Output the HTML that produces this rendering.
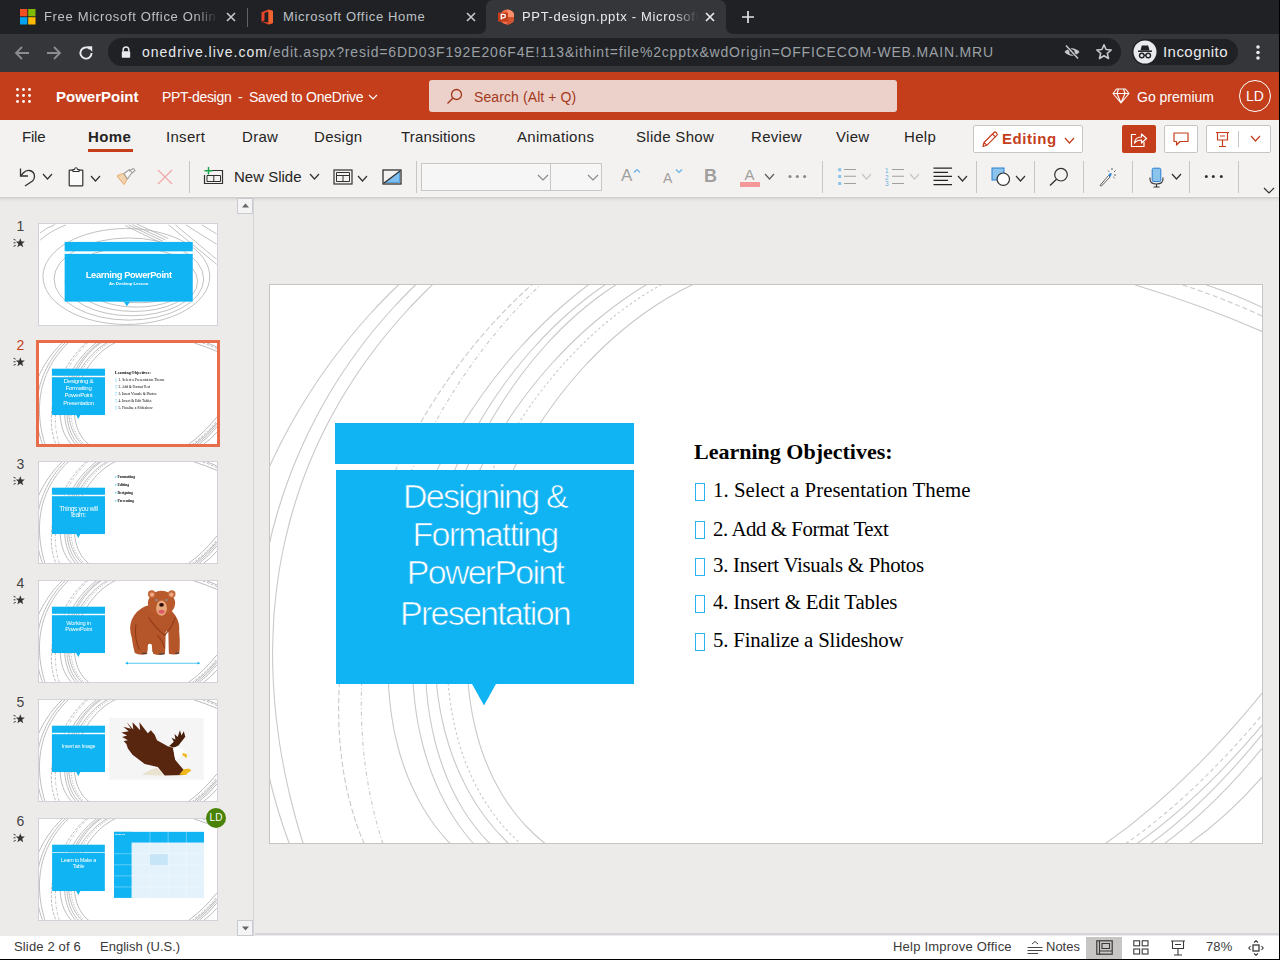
<!DOCTYPE html>
<html><head><meta charset="utf-8">
<style>
*{box-sizing:border-box;margin:0;padding:0}
html,body{width:1280px;height:960px;overflow:hidden;background:#000;font-family:"Liberation Sans",sans-serif}
.a{position:absolute}
#root{position:absolute;left:0;top:0;width:1280px;height:960px;overflow:hidden;background:#edebe9}
/* chrome */
#tabs{left:0;top:0;width:1280px;height:34px;background:#202124}
.tabt{position:absolute;top:9px;font-size:13px;color:#bdc1c6;white-space:nowrap;overflow:hidden;line-height:16px}
#addr{left:0;top:34px;width:1280px;height:38px;background:#35363a}
#url{left:108px;top:4px;width:1013px;height:28px;border-radius:14px;background:#202124}
/* office header */
#ohdr{left:0;top:72px;width:1279px;height:48px;background:#c43e1c}
/* ribbon */
#rib{left:0;top:120px;width:1279px;height:77px;background:#f3f2f1;border-bottom:1px solid #f7f6f4}
.rt{position:absolute;top:128px;font-size:15px;color:#252423;line-height:18px}
.sep{position:absolute;width:1px;background:#c8c6c4}
/* left pane */
.num{position:absolute;left:13.5px;font-size:14px;color:#484644;width:14px;text-align:center;line-height:16px}
.thumb{position:absolute;left:38px;width:180px;height:102px;border:1px solid #d2d0d8;background:#fff;overflow:hidden}
/* status */
#status{left:0;top:936px;width:1279px;height:23px;background:#fff}
.st{position:absolute;top:939px;font-size:13px;color:#3b3a39;line-height:16px;white-space:nowrap}
.ttl{left:65px;width:300px;text-align:center;color:#fff;font:34px/34px "Liberation Sans",sans-serif;letter-spacing:-1.75px;white-space:nowrap;-webkit-text-stroke:0.7px #10b4f2;paint-order:normal}
.itm{left:442px;font:20.8px/21px "Liberation Serif",serif;color:#000;white-space:nowrap}
.bx{left:424.5px;width:10px;height:17.5px;border:1.3px solid #2bb5ef}
</style></head>
<body><div id="root">

<!-- ============ CHROME TABS ============ -->
<div id="tabs" class="a">
  <!-- tab1 -->
  <svg class="a" style="left:20px;top:9px" width="16" height="16"><rect x="0" y="0" width="7.3" height="7.3" fill="#f25022"/><rect x="8.2" y="0" width="7.3" height="7.3" fill="#7fba00"/><rect x="0" y="8.2" width="7.3" height="7.3" fill="#00a4ef"/><rect x="8.2" y="8.2" width="7.3" height="7.3" fill="#ffb900"/></svg>
  <div class="tabt" style="left:44px;width:174px;letter-spacing:0.67px;-webkit-mask-image:linear-gradient(90deg,#000 150px,transparent 174px)">Free Microsoft Office Online</div>
  <svg class="a" style="left:226px;top:12px" width="10" height="10"><path d="M1 1L9 9M9 1L1 9" stroke="#c5c8cc" stroke-width="1.6"/></svg>
  <div class="a" style="left:247px;top:8px;width:1px;height:19px;background:#5f6368"></div>
  <!-- tab2 -->
  <svg class="a" style="left:260px;top:9px" width="14" height="16" viewBox="0 0 14 16"><path d="M1.5 3.2 L8.5 0.5 L13 2 L13 14 L8.5 15.5 L1.5 12.8 L8.5 13.6 L8.5 2.6 L4.5 4 L4.5 11.6 L1.5 12.8 Z" fill="#e8442a"/><path d="M8.5 0.5 L13 2 L13 14 L8.5 15.5 Z" fill="#f0622f"/></svg>
  <div class="tabt" style="left:283px;letter-spacing:0.67px">Microsoft Office Home</div>
  <svg class="a" style="left:466px;top:12px" width="10" height="10"><path d="M1 1L9 9M9 1L1 9" stroke="#c5c8cc" stroke-width="1.6"/></svg>
  <!-- active tab -->
  <svg class="a" style="left:478px;top:0" width="257" height="34"><path d="M0 34 Q8 34 8 26 L8 8 Q8 0 16 0 L240 0 Q248 0 248 8 L248 26 Q248 34 256 34 Z" fill="#35363a"/></svg>
  <svg class="a" style="left:498px;top:9px" width="16" height="16" viewBox="0 0 16 16"><circle cx="9.2" cy="8" r="7.6" fill="#ed6c47"/><path d="M9.2 0.4 A7.6 7.6 0 0 1 16.8 8 L9.2 8 Z" fill="#ff8f6b"/><path d="M9.2 8 L16.8 8 A7.6 7.6 0 0 1 9.2 15.6 Z" fill="#d35230"/><rect x="0" y="3.6" width="10" height="9" fill="#c43e1c"/><path d="M3.3 10.6 V5.4 H5.6 Q7.4 5.4 7.4 7.1 Q7.4 8.8 5.6 8.8 H3.3" fill="none" stroke="#fff" stroke-width="1.3"/></svg>
  <div class="tabt" style="left:522px;width:176px;color:#e8eaed;letter-spacing:0.67px;-webkit-mask-image:linear-gradient(90deg,#000 152px,transparent 176px)">PPT-design.pptx - Microsoft Office</div>
  <svg class="a" style="left:705px;top:12px" width="10" height="10"><path d="M1 1L9 9M9 1L1 9" stroke="#e8eaed" stroke-width="1.7"/></svg>
  <svg class="a" style="left:741px;top:10px" width="14" height="14"><path d="M7 1V13M1 7H13" stroke="#e0e2e6" stroke-width="1.7"/></svg>
</div>

<!-- ============ ADDRESS ROW ============ -->
<div id="addr" class="a">
  <svg class="a" style="left:14px;top:11px" width="16" height="16"><path d="M15 8H2M8 2L2 8L8 14" fill="none" stroke="#8a8d91" stroke-width="1.8"/></svg>
  <svg class="a" style="left:46px;top:11px" width="16" height="16"><path d="M1 8H14M8 2L14 8L8 14" fill="none" stroke="#8a8d91" stroke-width="1.8"/></svg>
  <svg class="a" style="left:77px;top:10px" width="18" height="18" viewBox="0 0 18 18"><path d="M14.6 9 A5.6 5.6 0 1 1 12.9 5" fill="none" stroke="#e8eaed" stroke-width="1.9"/><path d="M9.8 2.3 H15.2 V7.7 Z" fill="#e8eaed"/></svg>
  <div id="url" class="a">
    <svg class="a" style="left:13px;top:8px" width="10" height="12" viewBox="0 0 10 12"><path d="M2.2 5.5V3.8A2.8 2.8 0 0 1 7.8 3.8V5.5" fill="none" stroke="#e8eaed" stroke-width="1.5"/><rect x="0.8" y="5.3" width="8.4" height="6.5" rx="0.8" fill="#e8eaed"/></svg>
    <div class="a" style="left:34px;top:5px;font-size:14px;line-height:18px;letter-spacing:0.83px;white-space:nowrap;color:#9aa0a6"><span style="color:#e8eaed;letter-spacing:1px">onedrive.live.com</span>/edit.aspx?resid=6DD03F192E206F4E!113&amp;ithint=file%2cpptx&amp;wdOrigin=OFFICECOM-WEB.MAIN.MRU</div>
    <svg class="a" style="left:955px;top:6px" width="18" height="16" viewBox="0 0 18 16"><path d="M1.5 8 Q9 0.5 16.5 8 Q9 15.5 1.5 8Z" fill="#c5c8cc"/><circle cx="9" cy="8" r="2.6" fill="#202124"/><path d="M3 1.5 L15 14.5" stroke="#202124" stroke-width="2.6"/><path d="M3 1.5 L15 14.5" stroke="#c5c8cc" stroke-width="1.5"/></svg>
    <svg class="a" style="left:987px;top:5px" width="18" height="18" viewBox="0 0 18 18"><path d="M9 1.8 L11.1 6.5 L16.2 7 L12.3 10.4 L13.5 15.5 L9 12.8 L4.5 15.5 L5.7 10.4 L1.8 7 L6.9 6.5 Z" fill="none" stroke="#c5c8cc" stroke-width="1.6" stroke-linejoin="round"/></svg>
  </div>
  <div class="a" style="left:1132px;top:5px;width:106px;height:26px;border-radius:13px;background:#202124"></div>
  <svg class="a" style="left:1133px;top:6px" width="24" height="24" viewBox="0 0 24 24"><circle cx="12" cy="12" r="11.5" fill="#e8eaed"/><path d="M5 11.2H19" stroke="#202124" stroke-width="1.5"/><path d="M7.5 10.5 L8.8 5.5 H15.2 L16.5 10.5 Z" fill="#202124"/><circle cx="8.8" cy="15.5" r="2.3" fill="none" stroke="#202124" stroke-width="1.4"/><circle cx="15.2" cy="15.5" r="2.3" fill="none" stroke="#202124" stroke-width="1.4"/><path d="M11 15.3H13" stroke="#202124" stroke-width="1.3"/></svg>
  <div class="a" style="left:1163px;top:9px;font-size:15px;line-height:18px;color:#e8eaed;letter-spacing:0.45px">Incognito</div>
  <svg class="a" style="left:1254px;top:10px" width="8" height="18"><circle cx="4" cy="3" r="1.8" fill="#e8eaed"/><circle cx="4" cy="8.5" r="1.8" fill="#e8eaed"/><circle cx="4" cy="14" r="1.8" fill="#e8eaed"/></svg>
</div>

<!-- ============ OFFICE HEADER ============ -->
<div id="ohdr" class="a">
  <svg class="a" style="left:15px;top:15px" width="18" height="18" viewBox="0 0 18 18" fill="#fff"><circle cx="2.5" cy="2.5" r="1.4"/><circle cx="8.5" cy="2.5" r="1.4"/><circle cx="14.5" cy="2.5" r="1.4"/><circle cx="2.5" cy="8.5" r="1.4"/><circle cx="8.5" cy="8.5" r="1.4"/><circle cx="14.5" cy="8.5" r="1.4"/><circle cx="2.5" cy="14.5" r="1.4"/><circle cx="8.5" cy="14.5" r="1.4"/><circle cx="14.5" cy="14.5" r="1.4"/></svg>
  <div class="a" style="left:56px;top:16px;font:bold 15px/18px 'Liberation Sans',sans-serif;color:#fff;white-space:nowrap">PowerPoint</div>
  <div class="a" style="left:162px;top:16px;font:14px/18px 'Liberation Sans',sans-serif;color:#fff;white-space:nowrap;letter-spacing:-0.3px">PPT-design</div>
  <div class="a" style="left:238px;top:16px;font:14px/18px 'Liberation Sans',sans-serif;color:#fff">-</div>
  <div class="a" style="left:249px;top:16px;font:14px/18px 'Liberation Sans',sans-serif;color:#fff;white-space:nowrap;letter-spacing:-0.23px">Saved to OneDrive</div>
  <svg class="a" style="left:368px;top:22px" width="10" height="6"><path d="M1 1L5 5L9 1" fill="none" stroke="#fff" stroke-width="1.2"/></svg>
  <div class="a" style="left:429px;top:8px;width:468px;height:32px;border-radius:3px;background:#ebd1c9"></div>
  <svg class="a" style="left:446px;top:16px" width="17" height="17" viewBox="0 0 17 17"><circle cx="10.5" cy="6.5" r="5" fill="none" stroke="#a4381c" stroke-width="1.3"/><path d="M7 10L1.5 15.5" stroke="#a4381c" stroke-width="1.4"/></svg>
  <div class="a" style="left:474px;top:16px;font:14px/18px 'Liberation Sans',sans-serif;color:#a4381c;white-space:nowrap;letter-spacing:0.1px">Search (Alt + Q)</div>
  <svg class="a" style="left:1112px;top:16px" width="18" height="16" viewBox="0 0 18 16"><path d="M4.5 1H13.5L17 5.5L9 15L1 5.5Z M1 5.5H17 M6.5 1L5 5.5L9 15L13 5.5L11.5 1" fill="none" stroke="#fff" stroke-width="1.1" stroke-linejoin="round"/></svg>
  <div class="a" style="left:1137px;top:16px;font:14px/18px 'Liberation Sans',sans-serif;color:#fff;white-space:nowrap">Go premium</div>
  <div class="a" style="left:1239px;top:8px;width:32px;height:32px;border-radius:50%;border:1.2px solid #fff;color:#fff;font:14px/30px 'Liberation Sans',sans-serif;text-align:center">LD</div>
</div>

<!-- ============ RIBBON ============ -->
<div id="rib" class="a"></div>
<div class="rt" style="left:22px;letter-spacing:-0.2px">File</div>
<div class="rt" style="left:88px;font-weight:bold;letter-spacing:0.4px">Home</div>
<div class="a" style="left:88px;top:149px;width:45px;height:3px;background:#c43e1c"></div>
<div class="rt" style="left:166px;letter-spacing:0.3px">Insert</div>
<div class="rt" style="left:242px;letter-spacing:0.3px">Draw</div>
<div class="rt" style="left:314px;letter-spacing:0.3px">Design</div>
<div class="rt" style="left:401px;letter-spacing:0.15px">Transitions</div>
<div class="rt" style="left:517px;letter-spacing:0.3px">Animations</div>
<div class="rt" style="left:636px;letter-spacing:0.3px">Slide Show</div>
<div class="rt" style="left:751px;letter-spacing:0.3px">Review</div>
<div class="rt" style="left:836px;letter-spacing:0.3px">View</div>
<div class="rt" style="left:904px;letter-spacing:0.3px">Help</div>
<!-- editing button -->
<div class="a" style="left:973px;top:125px;width:110px;height:28px;border:1px solid #c8c6c4;border-radius:2px;background:#fff"></div>
<svg class="a" style="left:981px;top:130px" width="18" height="18" viewBox="0 0 18 18"><path d="M2 16.5L3 12.5L13 2.5Q14 1.5 15 2.5L15.8 3.3Q16.8 4.3 15.8 5.3L5.8 15.3Z M11.5 4L14.3 6.8 M3 12.5L5.8 15.3" fill="none" stroke="#c43e1c" stroke-width="1.2" stroke-linejoin="round"/></svg>
<div class="a" style="left:1002px;top:130px;font:bold 15px/18px 'Liberation Sans',sans-serif;color:#c43e1c;letter-spacing:0.55px">Editing</div>
<svg class="a" style="left:1064px;top:137px" width="11" height="7"><path d="M1 1L5.5 6L10 1" fill="none" stroke="#c43e1c" stroke-width="1.2"/></svg>
<div class="a" style="left:1122px;top:125px;width:34px;height:28px;border-radius:2px;background:#c43e1c"></div>
<svg class="a" style="left:1129px;top:131px" width="19" height="17" viewBox="0 0 19 17"><path d="M7 3.5H2.5V15.5H15V11" fill="none" stroke="#fff" stroke-width="1.2"/><path d="M5.5 12Q6 6 12.5 6V3L17.5 7.5L12.5 12V9Q8 9 5.5 12Z" fill="none" stroke="#fff" stroke-width="1.2" stroke-linejoin="round"/></svg>
<div class="a" style="left:1164px;top:125px;width:34px;height:28px;border:1px solid #c8c6c4;border-radius:2px;background:#fff"></div>
<svg class="a" style="left:1173px;top:132px" width="16" height="14" viewBox="0 0 16 14"><path d="M1 1H15V9.5H7L3.5 13V9.5H1Z" fill="none" stroke="#c43e1c" stroke-width="1.2" stroke-linejoin="round"/></svg>
<div class="a" style="left:1206px;top:125px;width:65px;height:28px;border:1px solid #c8c6c4;border-radius:2px;background:#fff"></div>
<svg class="a" style="left:1215px;top:131px" width="15" height="17" viewBox="0 0 15 17"><path d="M1 1.5H14 M2.5 1.5V9H12.5V1.5 M7.5 9V15 M4 15.5H11 M5 5H10" fill="none" stroke="#c43e1c" stroke-width="1.2"/></svg>
<div class="a" style="left:1238px;top:131px;width:1px;height:16px;background:#c8c6c4"></div>
<svg class="a" style="left:1250px;top:135px" width="11" height="7"><path d="M1 1L5.5 6L10 1" fill="none" stroke="#c43e1c" stroke-width="1.2"/></svg>
<!-- toolbar -->
<svg class="a" style="left:18px;top:167px" width="20" height="20" viewBox="0 0 20 20"><path d="M2.5 1.5V9H10" fill="none" stroke="#323130" stroke-width="1.3"/><path d="M2.8 8.8L5.5 5.8Q8 3 11.5 3.5Q16.5 4.5 16.5 9.5Q16.5 12 14.5 14L7 19" fill="none" stroke="#323130" stroke-width="1.3"/></svg>
<svg class="a" style="left:42px;top:173px" width="11" height="7"><path d="M1 1L5.5 6L10 1" fill="none" stroke="#323130" stroke-width="1.2"/></svg>
<svg class="a" style="left:68px;top:167px" width="16" height="20" viewBox="0 0 16 20"><rect x="1.2" y="3.2" width="13.6" height="15.6" rx="0.5" fill="#fafafa" stroke="#323130" stroke-width="1.2"/><path d="M5 4.5V2.5H6.5Q6.8 0.8 8 0.8Q9.2 0.8 9.5 2.5H11V4.5Z" fill="#fff" stroke="#323130" stroke-width="1.1"/></svg>
<svg class="a" style="left:90px;top:175px" width="11" height="7"><path d="M1 1L5.5 6L10 1" fill="none" stroke="#323130" stroke-width="1.2"/></svg>
<svg class="a" style="left:116px;top:168px" width="20" height="18" viewBox="0 0 20 18"><path d="M1 8Q4 6 7.5 5.5L11 11Q10 14 8 16.5Q4 12 1 8Z" fill="#f3d2b0" stroke="#e8a868" stroke-width="1"/><path d="M8 5.5L13.5 1.5L16 4.5L11.5 11Z M13 3L17.5 0.5L19 2.5L15.5 5.5" fill="#f8f8f8" stroke="#a19f9d" stroke-width="1.1" stroke-linejoin="round"/></svg>
<svg class="a" style="left:157px;top:169px" width="16" height="16"><path d="M1 1L15 15M15 1L1 15" stroke="#f1a7a7" stroke-width="1.2"/></svg>
<div class="sep" style="left:189px;top:161px;height:32px"></div>
<svg class="a" style="left:203px;top:166px" width="21" height="19" viewBox="0 0 21 19"><path d="M5.5 4.5H19.5V17.5H1.5V9" fill="none" stroke="#323130" stroke-width="1.2"/><path d="M4 9.5H17.5V15.5H4Z M10.8 9.5V15.5" fill="none" stroke="#323130" stroke-width="1"/><path d="M5.5 1V8.5M1.5 4.75H9.5" stroke="#17a34a" stroke-width="1.4"/></svg>
<div class="a" style="left:234px;top:168px;font:15px/18px 'Liberation Sans',sans-serif;color:#252423;white-space:nowrap">New Slide</div>
<svg class="a" style="left:309px;top:173px" width="11" height="7"><path d="M1 1L5.5 6L10 1" fill="none" stroke="#323130" stroke-width="1.2"/></svg>
<svg class="a" style="left:333px;top:169px" width="20" height="16" viewBox="0 0 20 16"><rect x="1" y="1" width="18" height="14" fill="none" stroke="#323130" stroke-width="1.2"/><path d="M3.5 3.5H16.5V12.5H3.5Z M3.5 6.5H16.5 M10 6.5V12.5" fill="none" stroke="#323130" stroke-width="1"/></svg>
<svg class="a" style="left:357px;top:175px" width="11" height="7"><path d="M1 1L5.5 6L10 1" fill="none" stroke="#323130" stroke-width="1.2"/></svg>
<svg class="a" style="left:382px;top:169px" width="20" height="16" viewBox="0 0 20 16"><path d="M17.5 2.5V13.5H3.5Z" fill="#7fbff0" stroke="#3a8fd6" stroke-width="0.8"/><rect x="1" y="1" width="18" height="14" fill="none" stroke="#323130" stroke-width="1.3"/><path d="M2 14L18 2" stroke="#323130" stroke-width="1.2"/></svg>
<div class="sep" style="left:416px;top:161px;height:32px"></div>
<div class="a" style="left:421px;top:163px;width:181px;height:28px;border:1px solid #c8c6c4;background:#f6f6f6"></div>
<div class="a" style="left:550px;top:163px;width:1px;height:28px;background:#c8c6c4"></div>
<svg class="a" style="left:537px;top:174px" width="12" height="7"><path d="M1 1L6.0 6L11 1" fill="none" stroke="#8a8886" stroke-width="1.2"/></svg>
<svg class="a" style="left:587px;top:174px" width="12" height="7"><path d="M1 1L6.0 6L11 1" fill="none" stroke="#8a8886" stroke-width="1.2"/></svg>
<div class="a" style="left:621px;top:166px;font:17px/20px 'Liberation Sans',sans-serif;color:#a19f9d">A</div>
<svg class="a" style="left:633px;top:168px" width="8" height="6"><path d="M1 4.5L4 1.5L7 4.5" fill="none" stroke="#69afe5" stroke-width="1.2"/></svg>
<div class="a" style="left:663px;top:169.5px;font:14px/16px 'Liberation Sans',sans-serif;color:#a19f9d">A</div>
<svg class="a" style="left:675px;top:168px" width="8" height="6"><path d="M1 1.5L4 4.5L7 1.5" fill="none" stroke="#69afe5" stroke-width="1.2"/></svg>
<div class="a" style="left:704px;top:166px;font:bold 18px/20px 'Liberation Sans',sans-serif;color:#a19f9d">B</div>
<div class="a" style="left:744.5px;top:166px;font:15px/18px 'Liberation Sans',sans-serif;color:#a19f9d">A</div>
<div class="a" style="left:740px;top:182px;width:20px;height:5px;background:#f4989a"></div>
<svg class="a" style="left:764px;top:173px" width="11" height="7"><path d="M1 1L5.5 6L10 1" fill="none" stroke="#605e5c" stroke-width="1.2"/></svg>
<svg class="a" style="left:787px;top:174px" width="20" height="5" fill="#8a8886"><circle cx="3" cy="2.5" r="1.5"/><circle cx="10.3" cy="2.5" r="1.5"/><circle cx="17.6" cy="2.5" r="1.5"/></svg>
<div class="sep" style="left:822px;top:161px;height:32px"></div>
<svg class="a" style="left:838px;top:168px" width="20" height="18" viewBox="0 0 20 18"><path d="M0.2 0.2h3v3h-3z M0.2 7h3v3h-3z M0.2 14h3v3h-3z" fill="#8ac4ea"/><path d="M6 1.5H18 M6 8.3H18 M6 15.5H18" stroke="#a19f9d" stroke-width="1.1"/></svg>
<svg class="a" style="left:861px;top:173px" width="11" height="7"><path d="M1 1L5.5 6L10 1" fill="none" stroke="#c8c6c4" stroke-width="1.2"/></svg>
<svg class="a" style="left:884px;top:166px" width="22" height="20" viewBox="0 0 22 20"><text x="1" y="7" font-size="6.5" fill="#69afe5" font-family="Liberation Sans">1</text><text x="1" y="13.5" font-size="6.5" fill="#69afe5" font-family="Liberation Sans">2</text><text x="1" y="20" font-size="6.5" fill="#69afe5" font-family="Liberation Sans">3</text><path d="M8 3.5H20 M8 10.3H20 M8 17.5H20" stroke="#a19f9d" stroke-width="1.1"/></svg>
<svg class="a" style="left:909px;top:173px" width="11" height="7"><path d="M1 1L5.5 6L10 1" fill="none" stroke="#c8c6c4" stroke-width="1.2"/></svg>
<svg class="a" style="left:933px;top:167px" width="20" height="19" viewBox="0 0 20 19"><path d="M0.5 1.2H19 M0.5 5.3H15 M0.5 9.3H19 M0.5 13.4H15 M0.5 17.6H19" stroke="#252423" stroke-width="1.2"/></svg>
<svg class="a" style="left:957px;top:175px" width="11" height="7"><path d="M1 1L5.5 6L10 1" fill="none" stroke="#323130" stroke-width="1.2"/></svg>
<div class="sep" style="left:976px;top:161px;height:32px"></div>
<svg class="a" style="left:991px;top:167px" width="20" height="20" viewBox="0 0 20 20"><rect x="1" y="1" width="12" height="12" fill="#8ac4ea" stroke="#2b7cd3" stroke-width="1"/><circle cx="12.3" cy="12.2" r="6.2" fill="#fff" stroke="#323130" stroke-width="1.2"/></svg>
<svg class="a" style="left:1015px;top:175px" width="11" height="7"><path d="M1 1L5.5 6L10 1" fill="none" stroke="#323130" stroke-width="1.2"/></svg>
<div class="sep" style="left:1034px;top:161px;height:32px"></div>
<svg class="a" style="left:1049px;top:167px" width="20" height="20" viewBox="0 0 20 20"><circle cx="12" cy="7.7" r="6.3" fill="none" stroke="#323130" stroke-width="1.2"/><path d="M7.5 12.3L1 18.5" stroke="#323130" stroke-width="1.3"/></svg>
<div class="sep" style="left:1083px;top:161px;height:32px"></div>
<svg class="a" style="left:1099px;top:167px" width="18" height="20" viewBox="0 0 18 20"><path d="M1 18.5L9.5 8.5L11 10L2.5 19Z" fill="#fff" stroke="#605e5c" stroke-width="1"/><path d="M9.3 8.2Q10.5 5.5 12.5 6Q13.2 8.5 11 10.2Z" fill="#2b88d8"/><path d="M13 1V3 M16.5 3.5L15 5 M17 8H15 M9 3.5L10.3 4.8 M15.5 11L14.3 10" stroke="#605e5c" stroke-width="1"/></svg>
<div class="sep" style="left:1132px;top:161px;height:32px"></div>
<svg class="a" style="left:1149px;top:167px" width="16" height="21" viewBox="0 0 16 21"><rect x="3.2" y="1.2" width="8.6" height="13.4" rx="1.5" fill="#8ac4ea" stroke="#2b7cd3" stroke-width="1"/><path d="M1 10.5V12Q1 17 7.5 17Q14 17 14 12V10.5 M7.5 17V20 M4.5 20H10.5" fill="none" stroke="#323130" stroke-width="1.1"/></svg>
<svg class="a" style="left:1171px;top:173px" width="11" height="7"><path d="M1 1L5.5 6L10 1" fill="none" stroke="#323130" stroke-width="1.2"/></svg>
<div class="sep" style="left:1189px;top:161px;height:32px"></div>
<svg class="a" style="left:1203px;top:174px" width="21" height="5" fill="#323130"><circle cx="3.3" cy="2.5" r="1.5"/><circle cx="10.3" cy="2.5" r="1.5"/><circle cx="18.3" cy="2.5" r="1.5"/></svg>
<div class="sep" style="left:1238px;top:161px;height:32px"></div>
<svg class="a" style="left:1263px;top:187px" width="12" height="7"><path d="M1 1L6.0 6L11 1" fill="none" stroke="#323130" stroke-width="1.2"/></svg>


<!-- ============ MAIN SLIDE ============ -->
<div id="slide" class="a" style="left:269px;top:284px;width:994px;height:560px;border:1px solid #c4c4c4;background:#fff;overflow:hidden">
<svg class="a" style="left:0;top:0" width="992" height="558" viewBox="270 285 992 558"><g fill="none" stroke="#c9c9c9" stroke-width="1.1"><path d="M401.5 282 L393.2 290 L385.2 298 L377.5 306 L370.1 314 L363.0 322 L356.1 330 L349.5 338 L343.1 346 L336.9 354 L330.9 362 L325.1 370 L319.5 378 L314.2 386 L309.0 394 L304.0 402 L299.1 410 L294.4 418 L289.9 426 L285.6 434 L281.4 442 L277.4 450 L273.5 458 L269.7 466 L266.1 474 L262.7 482 L259.3 490 L256.2 498 L253.1 506 L250.2 514 L247.4 522 L244.7 530 L242.2 538 L239.8 546 L237.5 554 L235.3 562 L233.2 570 L231.3 578 L229.5 586 L227.8 594 L226.2 602 L224.7 610 L223.3 618 L222.1 626 L220.9 634 L219.9 642 L219.0 650 L218.2 658 L217.5 666 L216.9 674 L216.4 682 L216.0 690 L215.7 698 L215.6 706 L215.5 714 L215.6 722 L215.7 730 L216.0 738 L216.4 746 L216.8 754 L217.4 762 L218.1 770 L218.9 778 L219.8 786 L220.9 794 L222.0 802 L223.3 810 L224.6 818 L226.1 826 L227.7 834 L229.4 842 L231.2 850"/><path d="M418.5 282 L410.2 290 L402.4 298 L394.8 306 L387.6 314 L380.6 322 L373.9 330 L367.5 338 L361.4 346 L355.5 354 L349.8 362 L344.3 370 L339.1 378 L334.0 386 L329.2 394 L324.5 402 L320.1 410 L315.8 418 L311.7 426 L307.7 434 L304.0 442 L300.4 450 L296.9 458 L293.6 466 L290.5 474 L287.5 482 L284.7 490 L282.0 498 L279.5 506 L277.0 514 L274.8 522 L272.6 530 L270.7 538 L268.8 546 L267.1 554 L265.5 562 L264.0 570 L262.6 578 L261.4 586 L260.3 594 L259.4 602 L258.5 610 L257.8 618 L257.2 626 L256.8 634 L256.4 642 L256.2 650 L256.1 658 L256.1 666 L256.3 674 L256.5 682 L256.9 690 L257.5 698 L258.1 706 L258.9 714 L259.7 722 L260.8 730 L261.9 738 L263.2 746 L264.6 754 L266.1 762 L267.7 770 L269.5 778 L271.4 786 L273.5 794 L275.7 802 L278.0 810 L280.5 818 L283.1 826 L285.8 834 L288.7 842 L291.7 850"/><path d="M435.2 282 L426.9 290 L419.0 298 L411.3 306 L404.0 314 L396.9 322 L390.1 330 L383.5 338 L377.2 346 L371.2 354 L365.3 362 L359.7 370 L354.4 378 L349.2 386 L344.3 394 L339.5 402 L335.0 410 L330.6 418 L326.4 426 L322.4 434 L318.6 442 L315.0 450 L311.5 458 L308.2 466 L305.1 474 L302.1 482 L299.3 490 L296.7 498 L294.2 506 L291.8 514 L289.6 522 L287.6 530 L285.6 538 L283.9 546 L282.2 554 L280.7 562 L279.3 570 L278.1 578 L277.0 586 L276.0 594 L275.2 602 L274.4 610 L273.8 618 L273.4 626 L273.0 634 L272.8 642 L272.6 650 L272.6 658 L272.7 666 L273.0 674 L273.3 682 L273.8 690 L274.3 698 L275.0 706 L275.8 714 L276.7 722 L277.7 730 L278.8 738 L280.0 746 L281.3 754 L282.8 762 L284.3 770 L285.9 778 L287.7 786 L289.5 794 L291.5 802 L293.5 810 L295.6 818 L297.9 826 L300.2 834 L302.7 842 L305.2 850"/><path d="M534.9 282 L525.9 290 L517.4 298 L509.3 306 L501.5 314 L494.0 322 L486.9 330 L480.0 338 L473.4 346 L467.0 354 L460.9 362 L454.9 370 L449.2 378 L443.7 386 L438.3 394 L433.2 402 L428.2 410 L423.3 418 L418.7 426 L414.2 434 L409.8 442 L405.6 450 L401.5 458 L397.6 466 L393.8 474 L390.2 482 L386.7 490 L383.3 498 L380.0 506 L376.9 514 L373.9 522 L371.0 530 L368.2 538 L365.6 546 L363.1 554 L360.7 562 L358.4 570 L356.3 578 L354.2 586 L352.3 594 L350.5 602 L348.9 610 L347.3 618 L345.9 626 L344.6 634 L343.4 642 L342.3 650 L341.4 658 L340.6 666 L339.9 674 L339.4 682 L339.0 690 L338.8 698 L338.6 706 L338.7 714 L338.8 722 L339.2 730 L339.6 738 L340.3 746 L341.1 754 L342.1 762 L343.2 770 L344.6 778 L346.1 786 L347.9 794 L349.9 802 L352.1 810 L354.5 818 L357.2 826 L360.2 834 L363.5 842 L367.1 850" stroke-dasharray="5.5 2.5"/><path d="M543.5 282 L535.1 290 L527.1 298 L519.4 306 L512.1 314 L505.0 322 L498.2 330 L491.6 338 L485.3 346 L479.3 354 L473.4 362 L467.8 370 L462.3 378 L457.0 386 L452.0 394 L447.1 402 L442.3 410 L437.8 418 L433.4 426 L429.1 434 L425.0 442 L421.1 450 L417.3 458 L413.6 466 L410.1 474 L406.7 482 L403.4 490 L400.3 498 L397.3 506 L394.4 514 L391.7 522 L389.0 530 L386.5 538 L384.1 546 L381.9 554 L379.7 562 L377.7 570 L375.8 578 L374.0 586 L372.3 594 L370.8 602 L369.4 610 L368.0 618 L366.8 626 L365.7 634 L364.8 642 L363.9 650 L363.2 658 L362.6 666 L362.1 674 L361.7 682 L361.4 690 L361.3 698 L361.3 706 L361.4 714 L361.6 722 L362.0 730 L362.5 738 L363.1 746 L363.9 754 L364.8 762 L365.9 770 L367.1 778 L368.4 786 L369.9 794 L371.6 802 L373.4 810 L375.4 818 L377.5 826 L379.9 834 L382.4 842 L385.1 850" stroke-dasharray="4 2.5 1 2.5"/><path d="M592.1 282 L581.6 290 L571.7 298 L562.3 306 L553.4 314 L544.9 322 L536.7 330 L529.0 338 L521.5 346 L514.4 354 L507.5 362 L501.0 370 L494.6 378 L488.6 386 L482.7 394 L477.1 402 L471.7 410 L466.5 418 L461.4 426 L456.6 434 L452.0 442 L447.5 450 L443.3 458 L439.2 466 L435.2 474 L431.5 482 L427.9 490 L424.4 498 L421.1 506 L418.0 514 L415.0 522 L412.2 530 L409.6 538 L407.1 546 L404.7 554 L402.5 562 L400.5 570 L398.6 578 L396.8 586 L395.2 594 L393.8 602 L392.5 610 L391.4 618 L390.4 626 L389.6 634 L389.0 642 L388.5 650 L388.2 658 L388.1 666 L388.2 674 L388.4 682 L388.8 690 L389.5 698 L390.3 706 L391.3 714 L392.6 722 L394.0 730 L395.8 738 L397.7 746 L399.9 754 L402.4 762 L405.2 770 L408.3 778 L411.8 786 L415.6 794 L419.8 802 L424.4 810 L429.5 818 L435.2 826 L441.5 834 L448.6 842 L456.5 850"/><path d="M609.2 282 L597.5 290 L586.8 298 L576.8 306 L567.5 314 L558.7 322 L550.5 330 L542.7 338 L535.2 346 L528.2 354 L521.4 362 L515.0 370 L508.9 378 L503.0 386 L497.4 394 L492.0 402 L486.9 410 L482.0 418 L477.3 426 L472.7 434 L468.4 442 L464.3 450 L460.3 458 L456.5 466 L452.9 474 L449.5 482 L446.2 490 L443.1 498 L440.1 506 L437.3 514 L434.6 522 L432.1 530 L429.8 538 L427.6 546 L425.5 554 L423.6 562 L421.8 570 L420.2 578 L418.8 586 L417.4 594 L416.3 602 L415.2 610 L414.3 618 L413.6 626 L413.1 634 L412.6 642 L412.4 650 L412.3 658 L412.3 666 L412.6 674 L413.0 682 L413.6 690 L414.3 698 L415.3 706 L416.4 714 L417.7 722 L419.3 730 L421.0 738 L423.0 746 L425.3 754 L427.8 762 L430.5 770 L433.6 778 L436.9 786 L440.6 794 L444.7 802 L449.1 810 L454.0 818 L459.4 826 L465.4 834 L472.0 842 L479.4 850"/><path d="M620.3 282 L608.0 290 L596.9 298 L586.7 306 L577.2 314 L568.4 322 L560.1 330 L552.3 338 L545.0 346 L538.0 354 L531.3 362 L525.0 370 L519.0 378 L513.2 386 L507.7 394 L502.4 402 L497.4 410 L492.6 418 L488.0 426 L483.6 434 L479.4 442 L475.3 450 L471.5 458 L467.8 466 L464.3 474 L461.0 482 L457.8 490 L454.7 498 L451.9 506 L449.1 514 L446.6 522 L444.1 530 L441.8 538 L439.7 546 L437.7 554 L435.9 562 L434.2 570 L432.6 578 L431.2 586 L429.9 594 L428.8 602 L427.8 610 L427.0 618 L426.3 626 L425.8 634 L425.4 642 L425.1 650 L425.1 658 L425.2 666 L425.4 674 L425.9 682 L426.5 690 L427.3 698 L428.2 706 L429.4 714 L430.8 722 L432.4 730 L434.2 738 L436.2 746 L438.5 754 L441.1 762 L443.9 770 L447.1 778 L450.6 786 L454.4 794 L458.7 802 L463.4 810 L468.6 818 L474.5 826 L481.0 834 L488.3 842 L496.7 850"/><path d="M650.8 282 L637.8 290 L625.8 298 L614.7 306 L604.4 314 L594.6 322 L585.4 330 L576.7 338 L568.5 346 L560.7 354 L553.2 362 L546.1 370 L539.3 378 L532.8 386 L526.6 394 L520.7 402 L515.0 410 L509.6 418 L504.4 426 L499.4 434 L494.7 442 L490.1 450 L485.8 458 L481.7 466 L477.7 474 L474.0 482 L470.4 490 L467.0 498 L463.8 506 L460.8 514 L457.9 522 L455.2 530 L452.7 538 L450.4 546 L448.2 554 L446.2 562 L444.3 570 L442.6 578 L441.1 586 L439.8 594 L438.6 602 L437.6 610 L436.7 618 L436.1 626 L435.6 634 L435.3 642 L435.1 650 L435.2 658 L435.4 666 L435.8 674 L436.4 682 L437.2 690 L438.2 698 L439.5 706 L440.9 714 L442.6 722 L444.5 730 L446.7 738 L449.1 746 L451.8 754 L454.8 762 L458.1 770 L461.8 778 L465.7 786 L470.1 794 L474.9 802 L480.1 810 L485.9 818 L492.2 826 L499.2 834 L507.0 842 L515.6 850"/><path d="M665.9 282 L651.8 290 L639.2 298 L627.6 306 L616.9 314 L607.0 322 L597.6 330 L588.9 338 L580.6 346 L572.8 354 L565.3 362 L558.2 370 L551.5 378 L545.0 386 L538.9 394 L533.0 402 L527.4 410 L522.0 418 L516.9 426 L512.0 434 L507.3 442 L502.8 450 L498.5 458 L494.4 466 L490.5 474 L486.8 482 L483.2 490 L479.9 498 L476.7 506 L473.7 514 L470.8 522 L468.1 530 L465.6 538 L463.2 546 L461.0 554 L459.0 562 L457.1 570 L455.4 578 L453.8 586 L452.4 594 L451.2 602 L450.1 610 L449.2 618 L448.5 626 L447.9 634 L447.5 642 L447.2 650 L447.2 658 L447.3 666 L447.6 674 L448.1 682 L448.8 690 L449.7 698 L450.9 706 L452.2 714 L453.8 722 L455.6 730 L457.6 738 L459.9 746 L462.5 754 L465.4 762 L468.6 770 L472.2 778 L476.1 786 L480.5 794 L485.3 802 L490.6 810 L496.5 818 L503.0 826 L510.4 834 L518.7 842 L528.2 850" stroke-dasharray="2.5 2.5"/><path d="M698.1 282 L681.8 290 L667.6 298 L654.8 306 L643.2 314 L632.5 322 L622.6 330 L613.3 338 L604.5 346 L596.3 354 L588.5 362 L581.1 370 L574.1 378 L567.4 386 L561.0 394 L555.0 402 L549.2 410 L543.6 418 L538.3 426 L533.3 434 L528.5 442 L523.9 450 L519.4 458 L515.2 466 L511.2 474 L507.4 482 L503.8 490 L500.4 498 L497.1 506 L494.0 514 L491.1 522 L488.3 530 L485.8 538 L483.3 546 L481.1 554 L479.0 562 L477.1 570 L475.3 578 L473.7 586 L472.3 594 L471.1 602 L470.0 610 L469.0 618 L468.3 626 L467.7 634 L467.3 642 L467.1 650 L467.0 658 L467.2 666 L467.5 674 L468.0 682 L468.8 690 L469.7 698 L470.9 706 L472.3 714 L473.9 722 L475.8 730 L477.9 738 L480.3 746 L483.0 754 L486.0 762 L489.4 770 L493.1 778 L497.3 786 L501.8 794 L506.9 802 L512.6 810 L518.9 818 L526.0 826 L534.0 834 L543.2 842 L553.9 850"/><path d="M1135.3 285.0 Q1198.7 304.0 1262.0 331.4"/><path d="M1182.7 285.0 Q1222.3 297.7 1262.0 316.0" stroke-dasharray="5 3"/><path d="M1206.4 285.0 Q1234.2 294.1 1262.0 307.3"/><path d="M1104.8 844.0 Q1183.4 789.4 1262.0 693.3"/><path d="M1125.3 844.0 Q1193.7 796.5 1262.0 715.0" stroke-dasharray="4 3"/><path d="M1136.4 844.0 Q1199.2 799.9 1262.0 725.3"/><path d="M1150.0 844.0 Q1206.0 803.4 1262.0 734.7"/><path d="M1163.8 844.0 Q1212.9 808.2 1262.0 748.4"/><path d="M1188.5 844.0 Q1225.2 818.7 1262.0 777.4"/></g></svg>
<div class="a" style="left:65px;top:138px;width:299px;height:41px;background:#10b4f2"></div><div class="a" style="left:66px;top:185px;width:298px;height:214px;background:#10b4f2"></div><svg class="a" style="left:199.0px;top:398px" width="30" height="24"><path d="M2.5 0 L27.5 0 L15 22.6 Z" fill="#10b4f2"/></svg>
<div class="ttl a" style="top:194px">Designing &amp;</div>
<div class="ttl a" style="top:232px">Formatting</div>
<div class="ttl a" style="top:270px">PowerPoint</div>
<div class="ttl a" style="top:311px">Presentation</div>
<div class="a" style="left:424px;top:156px;font:bold 22px/22px 'Liberation Serif',serif;color:#000;white-space:nowrap">Learning Objectives:</div>
<div class="bx a" style="top:198px"></div><div class="itm a" style="top:194px;left:443px;letter-spacing:0.03px">1. Select a Presentation Theme</div>
<div class="bx a" style="top:236px"></div><div class="itm a" style="top:232.5px;left:443px;letter-spacing:-0.41px">2. Add &amp; Format Text</div>
<div class="bx a" style="top:273px"></div><div class="itm a" style="top:269px;left:443px;letter-spacing:-0.25px">3. Insert Visuals &amp; Photos</div>
<div class="bx a" style="top:310px"></div><div class="itm a" style="top:306px;left:443px;letter-spacing:-0.17px">4. Insert &amp; Edit Tables</div>
<div class="bx a" style="top:348px"></div><div class="itm a" style="top:344px;left:443px;letter-spacing:-0.16px">5. Finalize a Slideshow</div>
</div>
<!-- ============ LEFT PANE ============ -->
<div class="a" style="left:0;top:197px;width:1279px;height:5px;background:linear-gradient(#cbc9c6 0px,#dbd9d6 1.5px,#e4e2df 2.5px,#edebe9 5px)"></div>
<div class="a" style="left:253px;top:197px;width:1px;height:739px;background:#d3d5da"></div>
<div class="a" style="left:237px;top:198px;width:16px;height:16px;border:1px solid #c9cbd0;background:#f4f4f4"></div><svg class="a" style="left:242px;top:203px" width="7" height="5"><path d="M0 4.5L3.5 0.5L7 4.5Z" fill="#666"/></svg>
<div class="a" style="left:237px;top:920px;width:16px;height:16px;border:1px solid #c9cbd0;background:#f4f4f4"></div><svg class="a" style="left:242px;top:926px" width="7" height="5"><path d="M0 0.5L3.5 4.5L7 0.5Z" fill="#666"/></svg>
<div class="num" style="top:218px;color:#444">1</div>
<svg class="a" style="left:13px;top:238px" width="12" height="10" viewBox="0 0 12 10"><path d="M0.6 1.3L2.6 2.1 M0.6 4.8H2.5 M0.6 8.3L2.7 7.4" stroke="#333" stroke-width="1"/><path d="M7.3 0.3L8.5 3.6L11.8 3.6L9.2 5.7L10.2 9.3L7.3 7.2L4.4 9.3L5.4 5.7L2.8 3.6L6.1 3.6Z" fill="#333"/></svg>
<div class="a" style="left:38px;top:223px;width:180px;height:103px;border:1px solid #d2d2d8;background:#fff;overflow:hidden"><div class="a" style="left:0;top:0;width:992px;height:558px;transform-origin:0 0;transform:scale(0.1794,0.181)"><svg class="a" style="left:0;top:0" width="992" height="558"><g fill="none" stroke="#b2b2b2" stroke-width="4.5"><ellipse cx="487" cy="290" rx="465" ry="265"/><ellipse cx="501" cy="304" rx="417" ry="227"/><ellipse cx="515" cy="318" rx="369" ry="189"/><ellipse cx="529" cy="332" rx="321" ry="151"/><ellipse cx="543" cy="346" rx="273" ry="113"/><ellipse cx="557" cy="360" rx="225" ry="75"/><path d="M722 5 L990 222 M760 5 L990 195 M819 5 L990 112 M908 5 L990 55 M480 8 L670 100 M500 5 L690 95 M520 3 L705 88 M545 0 L720 80 M5 50 Q40 20 90 3 M5 90 Q60 40 150 5"/></g></svg><div class="a" style="left:143px;top:99px;width:714px;height:52px;background:#10b4f2"></div>
<div class="a" style="left:143px;top:165px;width:714px;height:264px;background:#10b4f2"></div>
<svg class="a" style="left:470px;top:428px" width="40" height="30"><path d="M2 0L38 0L20 26Z" fill="#10b4f2"/></svg>
<div class="a" style="left:143px;top:253px;width:714px;text-align:center;color:#fff;font:bold 52px/52px 'Liberation Sans',sans-serif;letter-spacing:-2.2px">Learning PowerPoint</div>
<div class="a" style="left:143px;top:317px;width:714px;text-align:center;color:#fff;font:bold 24px/24px 'Liberation Sans',sans-serif;letter-spacing:-0.3px">An Desktop Lesson</div></div></div>
<div class="num" style="top:337px;color:#c43e1c">2</div>
<svg class="a" style="left:13px;top:357px" width="12" height="10" viewBox="0 0 12 10"><path d="M0.6 1.3L2.6 2.1 M0.6 4.8H2.5 M0.6 8.3L2.7 7.4" stroke="#333" stroke-width="1"/><path d="M7.3 0.3L8.5 3.6L11.8 3.6L9.2 5.7L10.2 9.3L7.3 7.2L4.4 9.3L5.4 5.7L2.8 3.6L6.1 3.6Z" fill="#333"/></svg>
<div class="a" style="left:38px;top:342px;width:180px;height:103px;border:1px solid #d2d2d8;background:#fff;overflow:hidden"><div class="a" style="left:0;top:0;width:992px;height:558px;transform-origin:0 0;transform:scale(0.1794,0.181)"><svg class="a" style="left:0;top:0" width="992" height="558" viewBox="270 285 992 558"><g fill="none" stroke="#adadad" stroke-width="4.6"><path d="M401.5 282 L393.2 290 L385.2 298 L377.5 306 L370.1 314 L363.0 322 L356.1 330 L349.5 338 L343.1 346 L336.9 354 L330.9 362 L325.1 370 L319.5 378 L314.2 386 L309.0 394 L304.0 402 L299.1 410 L294.4 418 L289.9 426 L285.6 434 L281.4 442 L277.4 450 L273.5 458 L269.7 466 L266.1 474 L262.7 482 L259.3 490 L256.2 498 L253.1 506 L250.2 514 L247.4 522 L244.7 530 L242.2 538 L239.8 546 L237.5 554 L235.3 562 L233.2 570 L231.3 578 L229.5 586 L227.8 594 L226.2 602 L224.7 610 L223.3 618 L222.1 626 L220.9 634 L219.9 642 L219.0 650 L218.2 658 L217.5 666 L216.9 674 L216.4 682 L216.0 690 L215.7 698 L215.6 706 L215.5 714 L215.6 722 L215.7 730 L216.0 738 L216.4 746 L216.8 754 L217.4 762 L218.1 770 L218.9 778 L219.8 786 L220.9 794 L222.0 802 L223.3 810 L224.6 818 L226.1 826 L227.7 834 L229.4 842 L231.2 850"/><path d="M418.5 282 L410.2 290 L402.4 298 L394.8 306 L387.6 314 L380.6 322 L373.9 330 L367.5 338 L361.4 346 L355.5 354 L349.8 362 L344.3 370 L339.1 378 L334.0 386 L329.2 394 L324.5 402 L320.1 410 L315.8 418 L311.7 426 L307.7 434 L304.0 442 L300.4 450 L296.9 458 L293.6 466 L290.5 474 L287.5 482 L284.7 490 L282.0 498 L279.5 506 L277.0 514 L274.8 522 L272.6 530 L270.7 538 L268.8 546 L267.1 554 L265.5 562 L264.0 570 L262.6 578 L261.4 586 L260.3 594 L259.4 602 L258.5 610 L257.8 618 L257.2 626 L256.8 634 L256.4 642 L256.2 650 L256.1 658 L256.1 666 L256.3 674 L256.5 682 L256.9 690 L257.5 698 L258.1 706 L258.9 714 L259.7 722 L260.8 730 L261.9 738 L263.2 746 L264.6 754 L266.1 762 L267.7 770 L269.5 778 L271.4 786 L273.5 794 L275.7 802 L278.0 810 L280.5 818 L283.1 826 L285.8 834 L288.7 842 L291.7 850"/><path d="M435.2 282 L426.9 290 L419.0 298 L411.3 306 L404.0 314 L396.9 322 L390.1 330 L383.5 338 L377.2 346 L371.2 354 L365.3 362 L359.7 370 L354.4 378 L349.2 386 L344.3 394 L339.5 402 L335.0 410 L330.6 418 L326.4 426 L322.4 434 L318.6 442 L315.0 450 L311.5 458 L308.2 466 L305.1 474 L302.1 482 L299.3 490 L296.7 498 L294.2 506 L291.8 514 L289.6 522 L287.6 530 L285.6 538 L283.9 546 L282.2 554 L280.7 562 L279.3 570 L278.1 578 L277.0 586 L276.0 594 L275.2 602 L274.4 610 L273.8 618 L273.4 626 L273.0 634 L272.8 642 L272.6 650 L272.6 658 L272.7 666 L273.0 674 L273.3 682 L273.8 690 L274.3 698 L275.0 706 L275.8 714 L276.7 722 L277.7 730 L278.8 738 L280.0 746 L281.3 754 L282.8 762 L284.3 770 L285.9 778 L287.7 786 L289.5 794 L291.5 802 L293.5 810 L295.6 818 L297.9 826 L300.2 834 L302.7 842 L305.2 850"/><path d="M534.9 282 L525.9 290 L517.4 298 L509.3 306 L501.5 314 L494.0 322 L486.9 330 L480.0 338 L473.4 346 L467.0 354 L460.9 362 L454.9 370 L449.2 378 L443.7 386 L438.3 394 L433.2 402 L428.2 410 L423.3 418 L418.7 426 L414.2 434 L409.8 442 L405.6 450 L401.5 458 L397.6 466 L393.8 474 L390.2 482 L386.7 490 L383.3 498 L380.0 506 L376.9 514 L373.9 522 L371.0 530 L368.2 538 L365.6 546 L363.1 554 L360.7 562 L358.4 570 L356.3 578 L354.2 586 L352.3 594 L350.5 602 L348.9 610 L347.3 618 L345.9 626 L344.6 634 L343.4 642 L342.3 650 L341.4 658 L340.6 666 L339.9 674 L339.4 682 L339.0 690 L338.8 698 L338.6 706 L338.7 714 L338.8 722 L339.2 730 L339.6 738 L340.3 746 L341.1 754 L342.1 762 L343.2 770 L344.6 778 L346.1 786 L347.9 794 L349.9 802 L352.1 810 L354.5 818 L357.2 826 L360.2 834 L363.5 842 L367.1 850" stroke-dasharray="16.5 7.5"/><path d="M543.5 282 L535.1 290 L527.1 298 L519.4 306 L512.1 314 L505.0 322 L498.2 330 L491.6 338 L485.3 346 L479.3 354 L473.4 362 L467.8 370 L462.3 378 L457.0 386 L452.0 394 L447.1 402 L442.3 410 L437.8 418 L433.4 426 L429.1 434 L425.0 442 L421.1 450 L417.3 458 L413.6 466 L410.1 474 L406.7 482 L403.4 490 L400.3 498 L397.3 506 L394.4 514 L391.7 522 L389.0 530 L386.5 538 L384.1 546 L381.9 554 L379.7 562 L377.7 570 L375.8 578 L374.0 586 L372.3 594 L370.8 602 L369.4 610 L368.0 618 L366.8 626 L365.7 634 L364.8 642 L363.9 650 L363.2 658 L362.6 666 L362.1 674 L361.7 682 L361.4 690 L361.3 698 L361.3 706 L361.4 714 L361.6 722 L362.0 730 L362.5 738 L363.1 746 L363.9 754 L364.8 762 L365.9 770 L367.1 778 L368.4 786 L369.9 794 L371.6 802 L373.4 810 L375.4 818 L377.5 826 L379.9 834 L382.4 842 L385.1 850" stroke-dasharray="12.0 7.5 3.0 7.5"/><path d="M592.1 282 L581.6 290 L571.7 298 L562.3 306 L553.4 314 L544.9 322 L536.7 330 L529.0 338 L521.5 346 L514.4 354 L507.5 362 L501.0 370 L494.6 378 L488.6 386 L482.7 394 L477.1 402 L471.7 410 L466.5 418 L461.4 426 L456.6 434 L452.0 442 L447.5 450 L443.3 458 L439.2 466 L435.2 474 L431.5 482 L427.9 490 L424.4 498 L421.1 506 L418.0 514 L415.0 522 L412.2 530 L409.6 538 L407.1 546 L404.7 554 L402.5 562 L400.5 570 L398.6 578 L396.8 586 L395.2 594 L393.8 602 L392.5 610 L391.4 618 L390.4 626 L389.6 634 L389.0 642 L388.5 650 L388.2 658 L388.1 666 L388.2 674 L388.4 682 L388.8 690 L389.5 698 L390.3 706 L391.3 714 L392.6 722 L394.0 730 L395.8 738 L397.7 746 L399.9 754 L402.4 762 L405.2 770 L408.3 778 L411.8 786 L415.6 794 L419.8 802 L424.4 810 L429.5 818 L435.2 826 L441.5 834 L448.6 842 L456.5 850"/><path d="M609.2 282 L597.5 290 L586.8 298 L576.8 306 L567.5 314 L558.7 322 L550.5 330 L542.7 338 L535.2 346 L528.2 354 L521.4 362 L515.0 370 L508.9 378 L503.0 386 L497.4 394 L492.0 402 L486.9 410 L482.0 418 L477.3 426 L472.7 434 L468.4 442 L464.3 450 L460.3 458 L456.5 466 L452.9 474 L449.5 482 L446.2 490 L443.1 498 L440.1 506 L437.3 514 L434.6 522 L432.1 530 L429.8 538 L427.6 546 L425.5 554 L423.6 562 L421.8 570 L420.2 578 L418.8 586 L417.4 594 L416.3 602 L415.2 610 L414.3 618 L413.6 626 L413.1 634 L412.6 642 L412.4 650 L412.3 658 L412.3 666 L412.6 674 L413.0 682 L413.6 690 L414.3 698 L415.3 706 L416.4 714 L417.7 722 L419.3 730 L421.0 738 L423.0 746 L425.3 754 L427.8 762 L430.5 770 L433.6 778 L436.9 786 L440.6 794 L444.7 802 L449.1 810 L454.0 818 L459.4 826 L465.4 834 L472.0 842 L479.4 850"/><path d="M620.3 282 L608.0 290 L596.9 298 L586.7 306 L577.2 314 L568.4 322 L560.1 330 L552.3 338 L545.0 346 L538.0 354 L531.3 362 L525.0 370 L519.0 378 L513.2 386 L507.7 394 L502.4 402 L497.4 410 L492.6 418 L488.0 426 L483.6 434 L479.4 442 L475.3 450 L471.5 458 L467.8 466 L464.3 474 L461.0 482 L457.8 490 L454.7 498 L451.9 506 L449.1 514 L446.6 522 L444.1 530 L441.8 538 L439.7 546 L437.7 554 L435.9 562 L434.2 570 L432.6 578 L431.2 586 L429.9 594 L428.8 602 L427.8 610 L427.0 618 L426.3 626 L425.8 634 L425.4 642 L425.1 650 L425.1 658 L425.2 666 L425.4 674 L425.9 682 L426.5 690 L427.3 698 L428.2 706 L429.4 714 L430.8 722 L432.4 730 L434.2 738 L436.2 746 L438.5 754 L441.1 762 L443.9 770 L447.1 778 L450.6 786 L454.4 794 L458.7 802 L463.4 810 L468.6 818 L474.5 826 L481.0 834 L488.3 842 L496.7 850"/><path d="M650.8 282 L637.8 290 L625.8 298 L614.7 306 L604.4 314 L594.6 322 L585.4 330 L576.7 338 L568.5 346 L560.7 354 L553.2 362 L546.1 370 L539.3 378 L532.8 386 L526.6 394 L520.7 402 L515.0 410 L509.6 418 L504.4 426 L499.4 434 L494.7 442 L490.1 450 L485.8 458 L481.7 466 L477.7 474 L474.0 482 L470.4 490 L467.0 498 L463.8 506 L460.8 514 L457.9 522 L455.2 530 L452.7 538 L450.4 546 L448.2 554 L446.2 562 L444.3 570 L442.6 578 L441.1 586 L439.8 594 L438.6 602 L437.6 610 L436.7 618 L436.1 626 L435.6 634 L435.3 642 L435.1 650 L435.2 658 L435.4 666 L435.8 674 L436.4 682 L437.2 690 L438.2 698 L439.5 706 L440.9 714 L442.6 722 L444.5 730 L446.7 738 L449.1 746 L451.8 754 L454.8 762 L458.1 770 L461.8 778 L465.7 786 L470.1 794 L474.9 802 L480.1 810 L485.9 818 L492.2 826 L499.2 834 L507.0 842 L515.6 850"/><path d="M665.9 282 L651.8 290 L639.2 298 L627.6 306 L616.9 314 L607.0 322 L597.6 330 L588.9 338 L580.6 346 L572.8 354 L565.3 362 L558.2 370 L551.5 378 L545.0 386 L538.9 394 L533.0 402 L527.4 410 L522.0 418 L516.9 426 L512.0 434 L507.3 442 L502.8 450 L498.5 458 L494.4 466 L490.5 474 L486.8 482 L483.2 490 L479.9 498 L476.7 506 L473.7 514 L470.8 522 L468.1 530 L465.6 538 L463.2 546 L461.0 554 L459.0 562 L457.1 570 L455.4 578 L453.8 586 L452.4 594 L451.2 602 L450.1 610 L449.2 618 L448.5 626 L447.9 634 L447.5 642 L447.2 650 L447.2 658 L447.3 666 L447.6 674 L448.1 682 L448.8 690 L449.7 698 L450.9 706 L452.2 714 L453.8 722 L455.6 730 L457.6 738 L459.9 746 L462.5 754 L465.4 762 L468.6 770 L472.2 778 L476.1 786 L480.5 794 L485.3 802 L490.6 810 L496.5 818 L503.0 826 L510.4 834 L518.7 842 L528.2 850" stroke-dasharray="7.5 7.5"/><path d="M698.1 282 L681.8 290 L667.6 298 L654.8 306 L643.2 314 L632.5 322 L622.6 330 L613.3 338 L604.5 346 L596.3 354 L588.5 362 L581.1 370 L574.1 378 L567.4 386 L561.0 394 L555.0 402 L549.2 410 L543.6 418 L538.3 426 L533.3 434 L528.5 442 L523.9 450 L519.4 458 L515.2 466 L511.2 474 L507.4 482 L503.8 490 L500.4 498 L497.1 506 L494.0 514 L491.1 522 L488.3 530 L485.8 538 L483.3 546 L481.1 554 L479.0 562 L477.1 570 L475.3 578 L473.7 586 L472.3 594 L471.1 602 L470.0 610 L469.0 618 L468.3 626 L467.7 634 L467.3 642 L467.1 650 L467.0 658 L467.2 666 L467.5 674 L468.0 682 L468.8 690 L469.7 698 L470.9 706 L472.3 714 L473.9 722 L475.8 730 L477.9 738 L480.3 746 L483.0 754 L486.0 762 L489.4 770 L493.1 778 L497.3 786 L501.8 794 L506.9 802 L512.6 810 L518.9 818 L526.0 826 L534.0 834 L543.2 842 L553.9 850"/><path d="M1135.3 285.0 Q1198.7 304.0 1262.0 331.4"/><path d="M1182.7 285.0 Q1222.3 297.7 1262.0 316.0" stroke-dasharray="15.0 9.0"/><path d="M1206.4 285.0 Q1234.2 294.1 1262.0 307.3"/><path d="M1104.8 844.0 Q1183.4 789.4 1262.0 693.3"/><path d="M1125.3 844.0 Q1193.7 796.5 1262.0 715.0" stroke-dasharray="12.0 9.0"/><path d="M1136.4 844.0 Q1199.2 799.9 1262.0 725.3"/><path d="M1150.0 844.0 Q1206.0 803.4 1262.0 734.7"/><path d="M1163.8 844.0 Q1212.9 808.2 1262.0 748.4"/><path d="M1188.5 844.0 Q1225.2 818.7 1262.0 777.4"/></g></svg>
<div class="a" style="left:72px;top:142px;width:296px;height:39px;background:#10b4f2"></div><div class="a" style="left:72px;top:189px;width:296px;height:209px;background:#10b4f2"></div><svg class="a" style="left:204.0px;top:397px" width="30" height="24"><path d="M2.5 0 L27.5 0 L15 22.6 Z" fill="#10b4f2"/></svg>
<div class="ttl a" style="left:70px;-webkit-text-stroke:0;top:194px">Designing &amp;</div>
<div class="ttl a" style="left:70px;-webkit-text-stroke:0;top:232px">Formatting</div>
<div class="ttl a" style="left:70px;-webkit-text-stroke:0;top:270px">PowerPoint</div>
<div class="ttl a" style="left:70px;-webkit-text-stroke:0;top:311px">Presentation</div>
<div class="a" style="left:424px;top:156px;font:bold 22px/22px 'Liberation Serif',serif;color:#000;white-space:nowrap">Learning Objectives:</div>
<div class="bx a" style="top:198px"></div><div class="itm a" style="top:194px;left:443px;letter-spacing:0.03px">1. Select a Presentation Theme</div>
<div class="bx a" style="top:236px"></div><div class="itm a" style="top:232.5px;left:443px;letter-spacing:-0.41px">2. Add &amp; Format Text</div>
<div class="bx a" style="top:273px"></div><div class="itm a" style="top:269px;left:443px;letter-spacing:-0.25px">3. Insert Visuals &amp; Photos</div>
<div class="bx a" style="top:310px"></div><div class="itm a" style="top:306px;left:443px;letter-spacing:-0.17px">4. Insert &amp; Edit Tables</div>
<div class="bx a" style="top:348px"></div><div class="itm a" style="top:344px;left:443px;letter-spacing:-0.16px">5. Finalize a Slideshow</div></div></div>
<div class="num" style="top:456px;color:#444">3</div>
<svg class="a" style="left:13px;top:476px" width="12" height="10" viewBox="0 0 12 10"><path d="M0.6 1.3L2.6 2.1 M0.6 4.8H2.5 M0.6 8.3L2.7 7.4" stroke="#333" stroke-width="1"/><path d="M7.3 0.3L8.5 3.6L11.8 3.6L9.2 5.7L10.2 9.3L7.3 7.2L4.4 9.3L5.4 5.7L2.8 3.6L6.1 3.6Z" fill="#333"/></svg>
<div class="a" style="left:38px;top:461px;width:180px;height:103px;border:1px solid #d2d2d8;background:#fff;overflow:hidden"><div class="a" style="left:0;top:0;width:992px;height:558px;transform-origin:0 0;transform:scale(0.1794,0.181)"><svg class="a" style="left:0;top:0" width="992" height="558" viewBox="270 285 992 558"><g fill="none" stroke="#adadad" stroke-width="4.6"><path d="M401.5 282 L393.2 290 L385.2 298 L377.5 306 L370.1 314 L363.0 322 L356.1 330 L349.5 338 L343.1 346 L336.9 354 L330.9 362 L325.1 370 L319.5 378 L314.2 386 L309.0 394 L304.0 402 L299.1 410 L294.4 418 L289.9 426 L285.6 434 L281.4 442 L277.4 450 L273.5 458 L269.7 466 L266.1 474 L262.7 482 L259.3 490 L256.2 498 L253.1 506 L250.2 514 L247.4 522 L244.7 530 L242.2 538 L239.8 546 L237.5 554 L235.3 562 L233.2 570 L231.3 578 L229.5 586 L227.8 594 L226.2 602 L224.7 610 L223.3 618 L222.1 626 L220.9 634 L219.9 642 L219.0 650 L218.2 658 L217.5 666 L216.9 674 L216.4 682 L216.0 690 L215.7 698 L215.6 706 L215.5 714 L215.6 722 L215.7 730 L216.0 738 L216.4 746 L216.8 754 L217.4 762 L218.1 770 L218.9 778 L219.8 786 L220.9 794 L222.0 802 L223.3 810 L224.6 818 L226.1 826 L227.7 834 L229.4 842 L231.2 850"/><path d="M418.5 282 L410.2 290 L402.4 298 L394.8 306 L387.6 314 L380.6 322 L373.9 330 L367.5 338 L361.4 346 L355.5 354 L349.8 362 L344.3 370 L339.1 378 L334.0 386 L329.2 394 L324.5 402 L320.1 410 L315.8 418 L311.7 426 L307.7 434 L304.0 442 L300.4 450 L296.9 458 L293.6 466 L290.5 474 L287.5 482 L284.7 490 L282.0 498 L279.5 506 L277.0 514 L274.8 522 L272.6 530 L270.7 538 L268.8 546 L267.1 554 L265.5 562 L264.0 570 L262.6 578 L261.4 586 L260.3 594 L259.4 602 L258.5 610 L257.8 618 L257.2 626 L256.8 634 L256.4 642 L256.2 650 L256.1 658 L256.1 666 L256.3 674 L256.5 682 L256.9 690 L257.5 698 L258.1 706 L258.9 714 L259.7 722 L260.8 730 L261.9 738 L263.2 746 L264.6 754 L266.1 762 L267.7 770 L269.5 778 L271.4 786 L273.5 794 L275.7 802 L278.0 810 L280.5 818 L283.1 826 L285.8 834 L288.7 842 L291.7 850"/><path d="M435.2 282 L426.9 290 L419.0 298 L411.3 306 L404.0 314 L396.9 322 L390.1 330 L383.5 338 L377.2 346 L371.2 354 L365.3 362 L359.7 370 L354.4 378 L349.2 386 L344.3 394 L339.5 402 L335.0 410 L330.6 418 L326.4 426 L322.4 434 L318.6 442 L315.0 450 L311.5 458 L308.2 466 L305.1 474 L302.1 482 L299.3 490 L296.7 498 L294.2 506 L291.8 514 L289.6 522 L287.6 530 L285.6 538 L283.9 546 L282.2 554 L280.7 562 L279.3 570 L278.1 578 L277.0 586 L276.0 594 L275.2 602 L274.4 610 L273.8 618 L273.4 626 L273.0 634 L272.8 642 L272.6 650 L272.6 658 L272.7 666 L273.0 674 L273.3 682 L273.8 690 L274.3 698 L275.0 706 L275.8 714 L276.7 722 L277.7 730 L278.8 738 L280.0 746 L281.3 754 L282.8 762 L284.3 770 L285.9 778 L287.7 786 L289.5 794 L291.5 802 L293.5 810 L295.6 818 L297.9 826 L300.2 834 L302.7 842 L305.2 850"/><path d="M534.9 282 L525.9 290 L517.4 298 L509.3 306 L501.5 314 L494.0 322 L486.9 330 L480.0 338 L473.4 346 L467.0 354 L460.9 362 L454.9 370 L449.2 378 L443.7 386 L438.3 394 L433.2 402 L428.2 410 L423.3 418 L418.7 426 L414.2 434 L409.8 442 L405.6 450 L401.5 458 L397.6 466 L393.8 474 L390.2 482 L386.7 490 L383.3 498 L380.0 506 L376.9 514 L373.9 522 L371.0 530 L368.2 538 L365.6 546 L363.1 554 L360.7 562 L358.4 570 L356.3 578 L354.2 586 L352.3 594 L350.5 602 L348.9 610 L347.3 618 L345.9 626 L344.6 634 L343.4 642 L342.3 650 L341.4 658 L340.6 666 L339.9 674 L339.4 682 L339.0 690 L338.8 698 L338.6 706 L338.7 714 L338.8 722 L339.2 730 L339.6 738 L340.3 746 L341.1 754 L342.1 762 L343.2 770 L344.6 778 L346.1 786 L347.9 794 L349.9 802 L352.1 810 L354.5 818 L357.2 826 L360.2 834 L363.5 842 L367.1 850" stroke-dasharray="16.5 7.5"/><path d="M543.5 282 L535.1 290 L527.1 298 L519.4 306 L512.1 314 L505.0 322 L498.2 330 L491.6 338 L485.3 346 L479.3 354 L473.4 362 L467.8 370 L462.3 378 L457.0 386 L452.0 394 L447.1 402 L442.3 410 L437.8 418 L433.4 426 L429.1 434 L425.0 442 L421.1 450 L417.3 458 L413.6 466 L410.1 474 L406.7 482 L403.4 490 L400.3 498 L397.3 506 L394.4 514 L391.7 522 L389.0 530 L386.5 538 L384.1 546 L381.9 554 L379.7 562 L377.7 570 L375.8 578 L374.0 586 L372.3 594 L370.8 602 L369.4 610 L368.0 618 L366.8 626 L365.7 634 L364.8 642 L363.9 650 L363.2 658 L362.6 666 L362.1 674 L361.7 682 L361.4 690 L361.3 698 L361.3 706 L361.4 714 L361.6 722 L362.0 730 L362.5 738 L363.1 746 L363.9 754 L364.8 762 L365.9 770 L367.1 778 L368.4 786 L369.9 794 L371.6 802 L373.4 810 L375.4 818 L377.5 826 L379.9 834 L382.4 842 L385.1 850" stroke-dasharray="12.0 7.5 3.0 7.5"/><path d="M592.1 282 L581.6 290 L571.7 298 L562.3 306 L553.4 314 L544.9 322 L536.7 330 L529.0 338 L521.5 346 L514.4 354 L507.5 362 L501.0 370 L494.6 378 L488.6 386 L482.7 394 L477.1 402 L471.7 410 L466.5 418 L461.4 426 L456.6 434 L452.0 442 L447.5 450 L443.3 458 L439.2 466 L435.2 474 L431.5 482 L427.9 490 L424.4 498 L421.1 506 L418.0 514 L415.0 522 L412.2 530 L409.6 538 L407.1 546 L404.7 554 L402.5 562 L400.5 570 L398.6 578 L396.8 586 L395.2 594 L393.8 602 L392.5 610 L391.4 618 L390.4 626 L389.6 634 L389.0 642 L388.5 650 L388.2 658 L388.1 666 L388.2 674 L388.4 682 L388.8 690 L389.5 698 L390.3 706 L391.3 714 L392.6 722 L394.0 730 L395.8 738 L397.7 746 L399.9 754 L402.4 762 L405.2 770 L408.3 778 L411.8 786 L415.6 794 L419.8 802 L424.4 810 L429.5 818 L435.2 826 L441.5 834 L448.6 842 L456.5 850"/><path d="M609.2 282 L597.5 290 L586.8 298 L576.8 306 L567.5 314 L558.7 322 L550.5 330 L542.7 338 L535.2 346 L528.2 354 L521.4 362 L515.0 370 L508.9 378 L503.0 386 L497.4 394 L492.0 402 L486.9 410 L482.0 418 L477.3 426 L472.7 434 L468.4 442 L464.3 450 L460.3 458 L456.5 466 L452.9 474 L449.5 482 L446.2 490 L443.1 498 L440.1 506 L437.3 514 L434.6 522 L432.1 530 L429.8 538 L427.6 546 L425.5 554 L423.6 562 L421.8 570 L420.2 578 L418.8 586 L417.4 594 L416.3 602 L415.2 610 L414.3 618 L413.6 626 L413.1 634 L412.6 642 L412.4 650 L412.3 658 L412.3 666 L412.6 674 L413.0 682 L413.6 690 L414.3 698 L415.3 706 L416.4 714 L417.7 722 L419.3 730 L421.0 738 L423.0 746 L425.3 754 L427.8 762 L430.5 770 L433.6 778 L436.9 786 L440.6 794 L444.7 802 L449.1 810 L454.0 818 L459.4 826 L465.4 834 L472.0 842 L479.4 850"/><path d="M620.3 282 L608.0 290 L596.9 298 L586.7 306 L577.2 314 L568.4 322 L560.1 330 L552.3 338 L545.0 346 L538.0 354 L531.3 362 L525.0 370 L519.0 378 L513.2 386 L507.7 394 L502.4 402 L497.4 410 L492.6 418 L488.0 426 L483.6 434 L479.4 442 L475.3 450 L471.5 458 L467.8 466 L464.3 474 L461.0 482 L457.8 490 L454.7 498 L451.9 506 L449.1 514 L446.6 522 L444.1 530 L441.8 538 L439.7 546 L437.7 554 L435.9 562 L434.2 570 L432.6 578 L431.2 586 L429.9 594 L428.8 602 L427.8 610 L427.0 618 L426.3 626 L425.8 634 L425.4 642 L425.1 650 L425.1 658 L425.2 666 L425.4 674 L425.9 682 L426.5 690 L427.3 698 L428.2 706 L429.4 714 L430.8 722 L432.4 730 L434.2 738 L436.2 746 L438.5 754 L441.1 762 L443.9 770 L447.1 778 L450.6 786 L454.4 794 L458.7 802 L463.4 810 L468.6 818 L474.5 826 L481.0 834 L488.3 842 L496.7 850"/><path d="M650.8 282 L637.8 290 L625.8 298 L614.7 306 L604.4 314 L594.6 322 L585.4 330 L576.7 338 L568.5 346 L560.7 354 L553.2 362 L546.1 370 L539.3 378 L532.8 386 L526.6 394 L520.7 402 L515.0 410 L509.6 418 L504.4 426 L499.4 434 L494.7 442 L490.1 450 L485.8 458 L481.7 466 L477.7 474 L474.0 482 L470.4 490 L467.0 498 L463.8 506 L460.8 514 L457.9 522 L455.2 530 L452.7 538 L450.4 546 L448.2 554 L446.2 562 L444.3 570 L442.6 578 L441.1 586 L439.8 594 L438.6 602 L437.6 610 L436.7 618 L436.1 626 L435.6 634 L435.3 642 L435.1 650 L435.2 658 L435.4 666 L435.8 674 L436.4 682 L437.2 690 L438.2 698 L439.5 706 L440.9 714 L442.6 722 L444.5 730 L446.7 738 L449.1 746 L451.8 754 L454.8 762 L458.1 770 L461.8 778 L465.7 786 L470.1 794 L474.9 802 L480.1 810 L485.9 818 L492.2 826 L499.2 834 L507.0 842 L515.6 850"/><path d="M665.9 282 L651.8 290 L639.2 298 L627.6 306 L616.9 314 L607.0 322 L597.6 330 L588.9 338 L580.6 346 L572.8 354 L565.3 362 L558.2 370 L551.5 378 L545.0 386 L538.9 394 L533.0 402 L527.4 410 L522.0 418 L516.9 426 L512.0 434 L507.3 442 L502.8 450 L498.5 458 L494.4 466 L490.5 474 L486.8 482 L483.2 490 L479.9 498 L476.7 506 L473.7 514 L470.8 522 L468.1 530 L465.6 538 L463.2 546 L461.0 554 L459.0 562 L457.1 570 L455.4 578 L453.8 586 L452.4 594 L451.2 602 L450.1 610 L449.2 618 L448.5 626 L447.9 634 L447.5 642 L447.2 650 L447.2 658 L447.3 666 L447.6 674 L448.1 682 L448.8 690 L449.7 698 L450.9 706 L452.2 714 L453.8 722 L455.6 730 L457.6 738 L459.9 746 L462.5 754 L465.4 762 L468.6 770 L472.2 778 L476.1 786 L480.5 794 L485.3 802 L490.6 810 L496.5 818 L503.0 826 L510.4 834 L518.7 842 L528.2 850" stroke-dasharray="7.5 7.5"/><path d="M698.1 282 L681.8 290 L667.6 298 L654.8 306 L643.2 314 L632.5 322 L622.6 330 L613.3 338 L604.5 346 L596.3 354 L588.5 362 L581.1 370 L574.1 378 L567.4 386 L561.0 394 L555.0 402 L549.2 410 L543.6 418 L538.3 426 L533.3 434 L528.5 442 L523.9 450 L519.4 458 L515.2 466 L511.2 474 L507.4 482 L503.8 490 L500.4 498 L497.1 506 L494.0 514 L491.1 522 L488.3 530 L485.8 538 L483.3 546 L481.1 554 L479.0 562 L477.1 570 L475.3 578 L473.7 586 L472.3 594 L471.1 602 L470.0 610 L469.0 618 L468.3 626 L467.7 634 L467.3 642 L467.1 650 L467.0 658 L467.2 666 L467.5 674 L468.0 682 L468.8 690 L469.7 698 L470.9 706 L472.3 714 L473.9 722 L475.8 730 L477.9 738 L480.3 746 L483.0 754 L486.0 762 L489.4 770 L493.1 778 L497.3 786 L501.8 794 L506.9 802 L512.6 810 L518.9 818 L526.0 826 L534.0 834 L543.2 842 L553.9 850"/><path d="M1135.3 285.0 Q1198.7 304.0 1262.0 331.4"/><path d="M1182.7 285.0 Q1222.3 297.7 1262.0 316.0" stroke-dasharray="15.0 9.0"/><path d="M1206.4 285.0 Q1234.2 294.1 1262.0 307.3"/><path d="M1104.8 844.0 Q1183.4 789.4 1262.0 693.3"/><path d="M1125.3 844.0 Q1193.7 796.5 1262.0 715.0" stroke-dasharray="12.0 9.0"/><path d="M1136.4 844.0 Q1199.2 799.9 1262.0 725.3"/><path d="M1150.0 844.0 Q1206.0 803.4 1262.0 734.7"/><path d="M1163.8 844.0 Q1212.9 808.2 1262.0 748.4"/><path d="M1188.5 844.0 Q1225.2 818.7 1262.0 777.4"/></g></svg><div class="a" style="left:72px;top:142px;width:296px;height:39px;background:#10b4f2"></div><div class="a" style="left:72px;top:189px;width:296px;height:209px;background:#10b4f2"></div><svg class="a" style="left:204.0px;top:397px" width="30" height="24"><path d="M2.5 0 L27.5 0 L15 22.6 Z" fill="#10b4f2"/></svg><div class="a" style="left:70px;top:240px;width:300px;text-align:center;color:#fff;font:36px/36px 'Liberation Sans',sans-serif;letter-spacing:-1.5px;white-space:nowrap">Things you will</div><div class="a" style="left:70px;top:276px;width:300px;text-align:center;color:#fff;font:36px/36px 'Liberation Sans',sans-serif;letter-spacing:-1.5px;white-space:nowrap">learn:</div><div class="a" style="left:424px;top:80px;width:6px;height:6px;background:#10b4f2"></div><div class="a" style="left:438px;top:70px;font:bold 20px/24px 'Liberation Serif',serif;color:#000">Formatting</div><div class="a" style="left:424px;top:124px;width:6px;height:6px;background:#10b4f2"></div><div class="a" style="left:438px;top:114px;font:bold 20px/24px 'Liberation Serif',serif;color:#000">Editing</div><div class="a" style="left:424px;top:168px;width:6px;height:6px;background:#10b4f2"></div><div class="a" style="left:438px;top:158px;font:bold 20px/24px 'Liberation Serif',serif;color:#000">Designing</div><div class="a" style="left:424px;top:212px;width:6px;height:6px;background:#10b4f2"></div><div class="a" style="left:438px;top:202px;font:bold 20px/24px 'Liberation Serif',serif;color:#000">Presenting</div></div></div>
<div class="num" style="top:575px;color:#444">4</div>
<svg class="a" style="left:13px;top:595px" width="12" height="10" viewBox="0 0 12 10"><path d="M0.6 1.3L2.6 2.1 M0.6 4.8H2.5 M0.6 8.3L2.7 7.4" stroke="#333" stroke-width="1"/><path d="M7.3 0.3L8.5 3.6L11.8 3.6L9.2 5.7L10.2 9.3L7.3 7.2L4.4 9.3L5.4 5.7L2.8 3.6L6.1 3.6Z" fill="#333"/></svg>
<div class="a" style="left:38px;top:580px;width:180px;height:103px;border:1px solid #d2d2d8;background:#fff;overflow:hidden"><div class="a" style="left:0;top:0;width:992px;height:558px;transform-origin:0 0;transform:scale(0.1794,0.181)"><svg class="a" style="left:0;top:0" width="992" height="558" viewBox="270 285 992 558"><g fill="none" stroke="#adadad" stroke-width="4.6"><path d="M401.5 282 L393.2 290 L385.2 298 L377.5 306 L370.1 314 L363.0 322 L356.1 330 L349.5 338 L343.1 346 L336.9 354 L330.9 362 L325.1 370 L319.5 378 L314.2 386 L309.0 394 L304.0 402 L299.1 410 L294.4 418 L289.9 426 L285.6 434 L281.4 442 L277.4 450 L273.5 458 L269.7 466 L266.1 474 L262.7 482 L259.3 490 L256.2 498 L253.1 506 L250.2 514 L247.4 522 L244.7 530 L242.2 538 L239.8 546 L237.5 554 L235.3 562 L233.2 570 L231.3 578 L229.5 586 L227.8 594 L226.2 602 L224.7 610 L223.3 618 L222.1 626 L220.9 634 L219.9 642 L219.0 650 L218.2 658 L217.5 666 L216.9 674 L216.4 682 L216.0 690 L215.7 698 L215.6 706 L215.5 714 L215.6 722 L215.7 730 L216.0 738 L216.4 746 L216.8 754 L217.4 762 L218.1 770 L218.9 778 L219.8 786 L220.9 794 L222.0 802 L223.3 810 L224.6 818 L226.1 826 L227.7 834 L229.4 842 L231.2 850"/><path d="M418.5 282 L410.2 290 L402.4 298 L394.8 306 L387.6 314 L380.6 322 L373.9 330 L367.5 338 L361.4 346 L355.5 354 L349.8 362 L344.3 370 L339.1 378 L334.0 386 L329.2 394 L324.5 402 L320.1 410 L315.8 418 L311.7 426 L307.7 434 L304.0 442 L300.4 450 L296.9 458 L293.6 466 L290.5 474 L287.5 482 L284.7 490 L282.0 498 L279.5 506 L277.0 514 L274.8 522 L272.6 530 L270.7 538 L268.8 546 L267.1 554 L265.5 562 L264.0 570 L262.6 578 L261.4 586 L260.3 594 L259.4 602 L258.5 610 L257.8 618 L257.2 626 L256.8 634 L256.4 642 L256.2 650 L256.1 658 L256.1 666 L256.3 674 L256.5 682 L256.9 690 L257.5 698 L258.1 706 L258.9 714 L259.7 722 L260.8 730 L261.9 738 L263.2 746 L264.6 754 L266.1 762 L267.7 770 L269.5 778 L271.4 786 L273.5 794 L275.7 802 L278.0 810 L280.5 818 L283.1 826 L285.8 834 L288.7 842 L291.7 850"/><path d="M435.2 282 L426.9 290 L419.0 298 L411.3 306 L404.0 314 L396.9 322 L390.1 330 L383.5 338 L377.2 346 L371.2 354 L365.3 362 L359.7 370 L354.4 378 L349.2 386 L344.3 394 L339.5 402 L335.0 410 L330.6 418 L326.4 426 L322.4 434 L318.6 442 L315.0 450 L311.5 458 L308.2 466 L305.1 474 L302.1 482 L299.3 490 L296.7 498 L294.2 506 L291.8 514 L289.6 522 L287.6 530 L285.6 538 L283.9 546 L282.2 554 L280.7 562 L279.3 570 L278.1 578 L277.0 586 L276.0 594 L275.2 602 L274.4 610 L273.8 618 L273.4 626 L273.0 634 L272.8 642 L272.6 650 L272.6 658 L272.7 666 L273.0 674 L273.3 682 L273.8 690 L274.3 698 L275.0 706 L275.8 714 L276.7 722 L277.7 730 L278.8 738 L280.0 746 L281.3 754 L282.8 762 L284.3 770 L285.9 778 L287.7 786 L289.5 794 L291.5 802 L293.5 810 L295.6 818 L297.9 826 L300.2 834 L302.7 842 L305.2 850"/><path d="M534.9 282 L525.9 290 L517.4 298 L509.3 306 L501.5 314 L494.0 322 L486.9 330 L480.0 338 L473.4 346 L467.0 354 L460.9 362 L454.9 370 L449.2 378 L443.7 386 L438.3 394 L433.2 402 L428.2 410 L423.3 418 L418.7 426 L414.2 434 L409.8 442 L405.6 450 L401.5 458 L397.6 466 L393.8 474 L390.2 482 L386.7 490 L383.3 498 L380.0 506 L376.9 514 L373.9 522 L371.0 530 L368.2 538 L365.6 546 L363.1 554 L360.7 562 L358.4 570 L356.3 578 L354.2 586 L352.3 594 L350.5 602 L348.9 610 L347.3 618 L345.9 626 L344.6 634 L343.4 642 L342.3 650 L341.4 658 L340.6 666 L339.9 674 L339.4 682 L339.0 690 L338.8 698 L338.6 706 L338.7 714 L338.8 722 L339.2 730 L339.6 738 L340.3 746 L341.1 754 L342.1 762 L343.2 770 L344.6 778 L346.1 786 L347.9 794 L349.9 802 L352.1 810 L354.5 818 L357.2 826 L360.2 834 L363.5 842 L367.1 850" stroke-dasharray="16.5 7.5"/><path d="M543.5 282 L535.1 290 L527.1 298 L519.4 306 L512.1 314 L505.0 322 L498.2 330 L491.6 338 L485.3 346 L479.3 354 L473.4 362 L467.8 370 L462.3 378 L457.0 386 L452.0 394 L447.1 402 L442.3 410 L437.8 418 L433.4 426 L429.1 434 L425.0 442 L421.1 450 L417.3 458 L413.6 466 L410.1 474 L406.7 482 L403.4 490 L400.3 498 L397.3 506 L394.4 514 L391.7 522 L389.0 530 L386.5 538 L384.1 546 L381.9 554 L379.7 562 L377.7 570 L375.8 578 L374.0 586 L372.3 594 L370.8 602 L369.4 610 L368.0 618 L366.8 626 L365.7 634 L364.8 642 L363.9 650 L363.2 658 L362.6 666 L362.1 674 L361.7 682 L361.4 690 L361.3 698 L361.3 706 L361.4 714 L361.6 722 L362.0 730 L362.5 738 L363.1 746 L363.9 754 L364.8 762 L365.9 770 L367.1 778 L368.4 786 L369.9 794 L371.6 802 L373.4 810 L375.4 818 L377.5 826 L379.9 834 L382.4 842 L385.1 850" stroke-dasharray="12.0 7.5 3.0 7.5"/><path d="M592.1 282 L581.6 290 L571.7 298 L562.3 306 L553.4 314 L544.9 322 L536.7 330 L529.0 338 L521.5 346 L514.4 354 L507.5 362 L501.0 370 L494.6 378 L488.6 386 L482.7 394 L477.1 402 L471.7 410 L466.5 418 L461.4 426 L456.6 434 L452.0 442 L447.5 450 L443.3 458 L439.2 466 L435.2 474 L431.5 482 L427.9 490 L424.4 498 L421.1 506 L418.0 514 L415.0 522 L412.2 530 L409.6 538 L407.1 546 L404.7 554 L402.5 562 L400.5 570 L398.6 578 L396.8 586 L395.2 594 L393.8 602 L392.5 610 L391.4 618 L390.4 626 L389.6 634 L389.0 642 L388.5 650 L388.2 658 L388.1 666 L388.2 674 L388.4 682 L388.8 690 L389.5 698 L390.3 706 L391.3 714 L392.6 722 L394.0 730 L395.8 738 L397.7 746 L399.9 754 L402.4 762 L405.2 770 L408.3 778 L411.8 786 L415.6 794 L419.8 802 L424.4 810 L429.5 818 L435.2 826 L441.5 834 L448.6 842 L456.5 850"/><path d="M609.2 282 L597.5 290 L586.8 298 L576.8 306 L567.5 314 L558.7 322 L550.5 330 L542.7 338 L535.2 346 L528.2 354 L521.4 362 L515.0 370 L508.9 378 L503.0 386 L497.4 394 L492.0 402 L486.9 410 L482.0 418 L477.3 426 L472.7 434 L468.4 442 L464.3 450 L460.3 458 L456.5 466 L452.9 474 L449.5 482 L446.2 490 L443.1 498 L440.1 506 L437.3 514 L434.6 522 L432.1 530 L429.8 538 L427.6 546 L425.5 554 L423.6 562 L421.8 570 L420.2 578 L418.8 586 L417.4 594 L416.3 602 L415.2 610 L414.3 618 L413.6 626 L413.1 634 L412.6 642 L412.4 650 L412.3 658 L412.3 666 L412.6 674 L413.0 682 L413.6 690 L414.3 698 L415.3 706 L416.4 714 L417.7 722 L419.3 730 L421.0 738 L423.0 746 L425.3 754 L427.8 762 L430.5 770 L433.6 778 L436.9 786 L440.6 794 L444.7 802 L449.1 810 L454.0 818 L459.4 826 L465.4 834 L472.0 842 L479.4 850"/><path d="M620.3 282 L608.0 290 L596.9 298 L586.7 306 L577.2 314 L568.4 322 L560.1 330 L552.3 338 L545.0 346 L538.0 354 L531.3 362 L525.0 370 L519.0 378 L513.2 386 L507.7 394 L502.4 402 L497.4 410 L492.6 418 L488.0 426 L483.6 434 L479.4 442 L475.3 450 L471.5 458 L467.8 466 L464.3 474 L461.0 482 L457.8 490 L454.7 498 L451.9 506 L449.1 514 L446.6 522 L444.1 530 L441.8 538 L439.7 546 L437.7 554 L435.9 562 L434.2 570 L432.6 578 L431.2 586 L429.9 594 L428.8 602 L427.8 610 L427.0 618 L426.3 626 L425.8 634 L425.4 642 L425.1 650 L425.1 658 L425.2 666 L425.4 674 L425.9 682 L426.5 690 L427.3 698 L428.2 706 L429.4 714 L430.8 722 L432.4 730 L434.2 738 L436.2 746 L438.5 754 L441.1 762 L443.9 770 L447.1 778 L450.6 786 L454.4 794 L458.7 802 L463.4 810 L468.6 818 L474.5 826 L481.0 834 L488.3 842 L496.7 850"/><path d="M650.8 282 L637.8 290 L625.8 298 L614.7 306 L604.4 314 L594.6 322 L585.4 330 L576.7 338 L568.5 346 L560.7 354 L553.2 362 L546.1 370 L539.3 378 L532.8 386 L526.6 394 L520.7 402 L515.0 410 L509.6 418 L504.4 426 L499.4 434 L494.7 442 L490.1 450 L485.8 458 L481.7 466 L477.7 474 L474.0 482 L470.4 490 L467.0 498 L463.8 506 L460.8 514 L457.9 522 L455.2 530 L452.7 538 L450.4 546 L448.2 554 L446.2 562 L444.3 570 L442.6 578 L441.1 586 L439.8 594 L438.6 602 L437.6 610 L436.7 618 L436.1 626 L435.6 634 L435.3 642 L435.1 650 L435.2 658 L435.4 666 L435.8 674 L436.4 682 L437.2 690 L438.2 698 L439.5 706 L440.9 714 L442.6 722 L444.5 730 L446.7 738 L449.1 746 L451.8 754 L454.8 762 L458.1 770 L461.8 778 L465.7 786 L470.1 794 L474.9 802 L480.1 810 L485.9 818 L492.2 826 L499.2 834 L507.0 842 L515.6 850"/><path d="M665.9 282 L651.8 290 L639.2 298 L627.6 306 L616.9 314 L607.0 322 L597.6 330 L588.9 338 L580.6 346 L572.8 354 L565.3 362 L558.2 370 L551.5 378 L545.0 386 L538.9 394 L533.0 402 L527.4 410 L522.0 418 L516.9 426 L512.0 434 L507.3 442 L502.8 450 L498.5 458 L494.4 466 L490.5 474 L486.8 482 L483.2 490 L479.9 498 L476.7 506 L473.7 514 L470.8 522 L468.1 530 L465.6 538 L463.2 546 L461.0 554 L459.0 562 L457.1 570 L455.4 578 L453.8 586 L452.4 594 L451.2 602 L450.1 610 L449.2 618 L448.5 626 L447.9 634 L447.5 642 L447.2 650 L447.2 658 L447.3 666 L447.6 674 L448.1 682 L448.8 690 L449.7 698 L450.9 706 L452.2 714 L453.8 722 L455.6 730 L457.6 738 L459.9 746 L462.5 754 L465.4 762 L468.6 770 L472.2 778 L476.1 786 L480.5 794 L485.3 802 L490.6 810 L496.5 818 L503.0 826 L510.4 834 L518.7 842 L528.2 850" stroke-dasharray="7.5 7.5"/><path d="M698.1 282 L681.8 290 L667.6 298 L654.8 306 L643.2 314 L632.5 322 L622.6 330 L613.3 338 L604.5 346 L596.3 354 L588.5 362 L581.1 370 L574.1 378 L567.4 386 L561.0 394 L555.0 402 L549.2 410 L543.6 418 L538.3 426 L533.3 434 L528.5 442 L523.9 450 L519.4 458 L515.2 466 L511.2 474 L507.4 482 L503.8 490 L500.4 498 L497.1 506 L494.0 514 L491.1 522 L488.3 530 L485.8 538 L483.3 546 L481.1 554 L479.0 562 L477.1 570 L475.3 578 L473.7 586 L472.3 594 L471.1 602 L470.0 610 L469.0 618 L468.3 626 L467.7 634 L467.3 642 L467.1 650 L467.0 658 L467.2 666 L467.5 674 L468.0 682 L468.8 690 L469.7 698 L470.9 706 L472.3 714 L473.9 722 L475.8 730 L477.9 738 L480.3 746 L483.0 754 L486.0 762 L489.4 770 L493.1 778 L497.3 786 L501.8 794 L506.9 802 L512.6 810 L518.9 818 L526.0 826 L534.0 834 L543.2 842 L553.9 850"/><path d="M1135.3 285.0 Q1198.7 304.0 1262.0 331.4"/><path d="M1182.7 285.0 Q1222.3 297.7 1262.0 316.0" stroke-dasharray="15.0 9.0"/><path d="M1206.4 285.0 Q1234.2 294.1 1262.0 307.3"/><path d="M1104.8 844.0 Q1183.4 789.4 1262.0 693.3"/><path d="M1125.3 844.0 Q1193.7 796.5 1262.0 715.0" stroke-dasharray="12.0 9.0"/><path d="M1136.4 844.0 Q1199.2 799.9 1262.0 725.3"/><path d="M1150.0 844.0 Q1206.0 803.4 1262.0 734.7"/><path d="M1163.8 844.0 Q1212.9 808.2 1262.0 748.4"/><path d="M1188.5 844.0 Q1225.2 818.7 1262.0 777.4"/></g></svg><div class="a" style="left:72px;top:142px;width:296px;height:39px;background:#10b4f2"></div><div class="a" style="left:72px;top:189px;width:296px;height:209px;background:#10b4f2"></div><svg class="a" style="left:204.0px;top:397px" width="30" height="24"><path d="M2.5 0 L27.5 0 L15 22.6 Z" fill="#10b4f2"/></svg><div class="a" style="left:70px;top:215px;width:300px;text-align:center;color:#fff;font:32px/32px 'Liberation Sans',sans-serif;letter-spacing:-1.5px;white-space:nowrap">Working in</div><div class="a" style="left:70px;top:247px;width:300px;text-align:center;color:#fff;font:32px/32px 'Liberation Sans',sans-serif;letter-spacing:-1.5px;white-space:nowrap">PowerPoint</div><svg class="a" style="left:0;top:0" width="992" height="558" viewBox="0 0 992 558">
<g fill="#b5552a">
<ellipse cx="645" cy="262" rx="137" ry="132"/>
<path d="M512 250 Q515 330 534 398 Q560 412 604 404 L606 330 Z"/>
<path d="M630 300 L636 402 Q670 414 704 404 L706 290 Z"/>
<path d="M700 250 L722 402 Q755 412 782 400 Q790 320 775 230 Z"/>
</g>
<path d="M604 412 L607 352 Q617 340 629 352 L633 412 Z M703 412 L706 282 Q713 272 721 282 L724 412 Z" fill="#fff"/>
<path d="M540 240 Q530 320 560 380 M610 200 Q650 260 700 300 Q740 260 760 200 M660 300 Q690 330 700 370" fill="none" stroke="#8f3a18" stroke-width="6"/>
<ellipse cx="683" cy="122" rx="76" ry="68" fill="#b85a2c"/>
<circle cx="628" cy="72" r="21" fill="#c2683a"/><circle cx="630" cy="75" r="12" fill="#f4a882"/>
<circle cx="740" cy="72" r="21" fill="#c2683a"/><circle cx="738" cy="75" r="12" fill="#f4a882"/>
<ellipse cx="683" cy="150" rx="30" ry="42" fill="#e6a878"/>
<circle cx="655" cy="105" r="6" fill="#7f9eac"/><circle cx="711" cy="105" r="6" fill="#7f9eac"/>
<ellipse cx="683" cy="132" rx="13" ry="10" fill="#2a0a0a"/>
<ellipse cx="683" cy="170" rx="17" ry="11" fill="#e05a6a"/>
<path d="M575 400 h25 M670 402 h28 M760 398 h20" stroke="#444" stroke-width="7"/>
</svg><div class="a" style="left:488px;top:452px;width:400px;height:4px;background:#10b4f2"></div><svg class="a" style="left:480px;top:444px" width="420" height="20"><path d="M0 10L16 2V18Z M420 10L404 2V18Z" fill="#10b4f2"/></svg></div></div>
<div class="num" style="top:694px;color:#444">5</div>
<svg class="a" style="left:13px;top:714px" width="12" height="10" viewBox="0 0 12 10"><path d="M0.6 1.3L2.6 2.1 M0.6 4.8H2.5 M0.6 8.3L2.7 7.4" stroke="#333" stroke-width="1"/><path d="M7.3 0.3L8.5 3.6L11.8 3.6L9.2 5.7L10.2 9.3L7.3 7.2L4.4 9.3L5.4 5.7L2.8 3.6L6.1 3.6Z" fill="#333"/></svg>
<div class="a" style="left:38px;top:699px;width:180px;height:103px;border:1px solid #d2d2d8;background:#fff;overflow:hidden"><div class="a" style="left:0;top:0;width:992px;height:558px;transform-origin:0 0;transform:scale(0.1794,0.181)"><svg class="a" style="left:0;top:0" width="992" height="558" viewBox="270 285 992 558"><g fill="none" stroke="#adadad" stroke-width="4.6"><path d="M401.5 282 L393.2 290 L385.2 298 L377.5 306 L370.1 314 L363.0 322 L356.1 330 L349.5 338 L343.1 346 L336.9 354 L330.9 362 L325.1 370 L319.5 378 L314.2 386 L309.0 394 L304.0 402 L299.1 410 L294.4 418 L289.9 426 L285.6 434 L281.4 442 L277.4 450 L273.5 458 L269.7 466 L266.1 474 L262.7 482 L259.3 490 L256.2 498 L253.1 506 L250.2 514 L247.4 522 L244.7 530 L242.2 538 L239.8 546 L237.5 554 L235.3 562 L233.2 570 L231.3 578 L229.5 586 L227.8 594 L226.2 602 L224.7 610 L223.3 618 L222.1 626 L220.9 634 L219.9 642 L219.0 650 L218.2 658 L217.5 666 L216.9 674 L216.4 682 L216.0 690 L215.7 698 L215.6 706 L215.5 714 L215.6 722 L215.7 730 L216.0 738 L216.4 746 L216.8 754 L217.4 762 L218.1 770 L218.9 778 L219.8 786 L220.9 794 L222.0 802 L223.3 810 L224.6 818 L226.1 826 L227.7 834 L229.4 842 L231.2 850"/><path d="M418.5 282 L410.2 290 L402.4 298 L394.8 306 L387.6 314 L380.6 322 L373.9 330 L367.5 338 L361.4 346 L355.5 354 L349.8 362 L344.3 370 L339.1 378 L334.0 386 L329.2 394 L324.5 402 L320.1 410 L315.8 418 L311.7 426 L307.7 434 L304.0 442 L300.4 450 L296.9 458 L293.6 466 L290.5 474 L287.5 482 L284.7 490 L282.0 498 L279.5 506 L277.0 514 L274.8 522 L272.6 530 L270.7 538 L268.8 546 L267.1 554 L265.5 562 L264.0 570 L262.6 578 L261.4 586 L260.3 594 L259.4 602 L258.5 610 L257.8 618 L257.2 626 L256.8 634 L256.4 642 L256.2 650 L256.1 658 L256.1 666 L256.3 674 L256.5 682 L256.9 690 L257.5 698 L258.1 706 L258.9 714 L259.7 722 L260.8 730 L261.9 738 L263.2 746 L264.6 754 L266.1 762 L267.7 770 L269.5 778 L271.4 786 L273.5 794 L275.7 802 L278.0 810 L280.5 818 L283.1 826 L285.8 834 L288.7 842 L291.7 850"/><path d="M435.2 282 L426.9 290 L419.0 298 L411.3 306 L404.0 314 L396.9 322 L390.1 330 L383.5 338 L377.2 346 L371.2 354 L365.3 362 L359.7 370 L354.4 378 L349.2 386 L344.3 394 L339.5 402 L335.0 410 L330.6 418 L326.4 426 L322.4 434 L318.6 442 L315.0 450 L311.5 458 L308.2 466 L305.1 474 L302.1 482 L299.3 490 L296.7 498 L294.2 506 L291.8 514 L289.6 522 L287.6 530 L285.6 538 L283.9 546 L282.2 554 L280.7 562 L279.3 570 L278.1 578 L277.0 586 L276.0 594 L275.2 602 L274.4 610 L273.8 618 L273.4 626 L273.0 634 L272.8 642 L272.6 650 L272.6 658 L272.7 666 L273.0 674 L273.3 682 L273.8 690 L274.3 698 L275.0 706 L275.8 714 L276.7 722 L277.7 730 L278.8 738 L280.0 746 L281.3 754 L282.8 762 L284.3 770 L285.9 778 L287.7 786 L289.5 794 L291.5 802 L293.5 810 L295.6 818 L297.9 826 L300.2 834 L302.7 842 L305.2 850"/><path d="M534.9 282 L525.9 290 L517.4 298 L509.3 306 L501.5 314 L494.0 322 L486.9 330 L480.0 338 L473.4 346 L467.0 354 L460.9 362 L454.9 370 L449.2 378 L443.7 386 L438.3 394 L433.2 402 L428.2 410 L423.3 418 L418.7 426 L414.2 434 L409.8 442 L405.6 450 L401.5 458 L397.6 466 L393.8 474 L390.2 482 L386.7 490 L383.3 498 L380.0 506 L376.9 514 L373.9 522 L371.0 530 L368.2 538 L365.6 546 L363.1 554 L360.7 562 L358.4 570 L356.3 578 L354.2 586 L352.3 594 L350.5 602 L348.9 610 L347.3 618 L345.9 626 L344.6 634 L343.4 642 L342.3 650 L341.4 658 L340.6 666 L339.9 674 L339.4 682 L339.0 690 L338.8 698 L338.6 706 L338.7 714 L338.8 722 L339.2 730 L339.6 738 L340.3 746 L341.1 754 L342.1 762 L343.2 770 L344.6 778 L346.1 786 L347.9 794 L349.9 802 L352.1 810 L354.5 818 L357.2 826 L360.2 834 L363.5 842 L367.1 850" stroke-dasharray="16.5 7.5"/><path d="M543.5 282 L535.1 290 L527.1 298 L519.4 306 L512.1 314 L505.0 322 L498.2 330 L491.6 338 L485.3 346 L479.3 354 L473.4 362 L467.8 370 L462.3 378 L457.0 386 L452.0 394 L447.1 402 L442.3 410 L437.8 418 L433.4 426 L429.1 434 L425.0 442 L421.1 450 L417.3 458 L413.6 466 L410.1 474 L406.7 482 L403.4 490 L400.3 498 L397.3 506 L394.4 514 L391.7 522 L389.0 530 L386.5 538 L384.1 546 L381.9 554 L379.7 562 L377.7 570 L375.8 578 L374.0 586 L372.3 594 L370.8 602 L369.4 610 L368.0 618 L366.8 626 L365.7 634 L364.8 642 L363.9 650 L363.2 658 L362.6 666 L362.1 674 L361.7 682 L361.4 690 L361.3 698 L361.3 706 L361.4 714 L361.6 722 L362.0 730 L362.5 738 L363.1 746 L363.9 754 L364.8 762 L365.9 770 L367.1 778 L368.4 786 L369.9 794 L371.6 802 L373.4 810 L375.4 818 L377.5 826 L379.9 834 L382.4 842 L385.1 850" stroke-dasharray="12.0 7.5 3.0 7.5"/><path d="M592.1 282 L581.6 290 L571.7 298 L562.3 306 L553.4 314 L544.9 322 L536.7 330 L529.0 338 L521.5 346 L514.4 354 L507.5 362 L501.0 370 L494.6 378 L488.6 386 L482.7 394 L477.1 402 L471.7 410 L466.5 418 L461.4 426 L456.6 434 L452.0 442 L447.5 450 L443.3 458 L439.2 466 L435.2 474 L431.5 482 L427.9 490 L424.4 498 L421.1 506 L418.0 514 L415.0 522 L412.2 530 L409.6 538 L407.1 546 L404.7 554 L402.5 562 L400.5 570 L398.6 578 L396.8 586 L395.2 594 L393.8 602 L392.5 610 L391.4 618 L390.4 626 L389.6 634 L389.0 642 L388.5 650 L388.2 658 L388.1 666 L388.2 674 L388.4 682 L388.8 690 L389.5 698 L390.3 706 L391.3 714 L392.6 722 L394.0 730 L395.8 738 L397.7 746 L399.9 754 L402.4 762 L405.2 770 L408.3 778 L411.8 786 L415.6 794 L419.8 802 L424.4 810 L429.5 818 L435.2 826 L441.5 834 L448.6 842 L456.5 850"/><path d="M609.2 282 L597.5 290 L586.8 298 L576.8 306 L567.5 314 L558.7 322 L550.5 330 L542.7 338 L535.2 346 L528.2 354 L521.4 362 L515.0 370 L508.9 378 L503.0 386 L497.4 394 L492.0 402 L486.9 410 L482.0 418 L477.3 426 L472.7 434 L468.4 442 L464.3 450 L460.3 458 L456.5 466 L452.9 474 L449.5 482 L446.2 490 L443.1 498 L440.1 506 L437.3 514 L434.6 522 L432.1 530 L429.8 538 L427.6 546 L425.5 554 L423.6 562 L421.8 570 L420.2 578 L418.8 586 L417.4 594 L416.3 602 L415.2 610 L414.3 618 L413.6 626 L413.1 634 L412.6 642 L412.4 650 L412.3 658 L412.3 666 L412.6 674 L413.0 682 L413.6 690 L414.3 698 L415.3 706 L416.4 714 L417.7 722 L419.3 730 L421.0 738 L423.0 746 L425.3 754 L427.8 762 L430.5 770 L433.6 778 L436.9 786 L440.6 794 L444.7 802 L449.1 810 L454.0 818 L459.4 826 L465.4 834 L472.0 842 L479.4 850"/><path d="M620.3 282 L608.0 290 L596.9 298 L586.7 306 L577.2 314 L568.4 322 L560.1 330 L552.3 338 L545.0 346 L538.0 354 L531.3 362 L525.0 370 L519.0 378 L513.2 386 L507.7 394 L502.4 402 L497.4 410 L492.6 418 L488.0 426 L483.6 434 L479.4 442 L475.3 450 L471.5 458 L467.8 466 L464.3 474 L461.0 482 L457.8 490 L454.7 498 L451.9 506 L449.1 514 L446.6 522 L444.1 530 L441.8 538 L439.7 546 L437.7 554 L435.9 562 L434.2 570 L432.6 578 L431.2 586 L429.9 594 L428.8 602 L427.8 610 L427.0 618 L426.3 626 L425.8 634 L425.4 642 L425.1 650 L425.1 658 L425.2 666 L425.4 674 L425.9 682 L426.5 690 L427.3 698 L428.2 706 L429.4 714 L430.8 722 L432.4 730 L434.2 738 L436.2 746 L438.5 754 L441.1 762 L443.9 770 L447.1 778 L450.6 786 L454.4 794 L458.7 802 L463.4 810 L468.6 818 L474.5 826 L481.0 834 L488.3 842 L496.7 850"/><path d="M650.8 282 L637.8 290 L625.8 298 L614.7 306 L604.4 314 L594.6 322 L585.4 330 L576.7 338 L568.5 346 L560.7 354 L553.2 362 L546.1 370 L539.3 378 L532.8 386 L526.6 394 L520.7 402 L515.0 410 L509.6 418 L504.4 426 L499.4 434 L494.7 442 L490.1 450 L485.8 458 L481.7 466 L477.7 474 L474.0 482 L470.4 490 L467.0 498 L463.8 506 L460.8 514 L457.9 522 L455.2 530 L452.7 538 L450.4 546 L448.2 554 L446.2 562 L444.3 570 L442.6 578 L441.1 586 L439.8 594 L438.6 602 L437.6 610 L436.7 618 L436.1 626 L435.6 634 L435.3 642 L435.1 650 L435.2 658 L435.4 666 L435.8 674 L436.4 682 L437.2 690 L438.2 698 L439.5 706 L440.9 714 L442.6 722 L444.5 730 L446.7 738 L449.1 746 L451.8 754 L454.8 762 L458.1 770 L461.8 778 L465.7 786 L470.1 794 L474.9 802 L480.1 810 L485.9 818 L492.2 826 L499.2 834 L507.0 842 L515.6 850"/><path d="M665.9 282 L651.8 290 L639.2 298 L627.6 306 L616.9 314 L607.0 322 L597.6 330 L588.9 338 L580.6 346 L572.8 354 L565.3 362 L558.2 370 L551.5 378 L545.0 386 L538.9 394 L533.0 402 L527.4 410 L522.0 418 L516.9 426 L512.0 434 L507.3 442 L502.8 450 L498.5 458 L494.4 466 L490.5 474 L486.8 482 L483.2 490 L479.9 498 L476.7 506 L473.7 514 L470.8 522 L468.1 530 L465.6 538 L463.2 546 L461.0 554 L459.0 562 L457.1 570 L455.4 578 L453.8 586 L452.4 594 L451.2 602 L450.1 610 L449.2 618 L448.5 626 L447.9 634 L447.5 642 L447.2 650 L447.2 658 L447.3 666 L447.6 674 L448.1 682 L448.8 690 L449.7 698 L450.9 706 L452.2 714 L453.8 722 L455.6 730 L457.6 738 L459.9 746 L462.5 754 L465.4 762 L468.6 770 L472.2 778 L476.1 786 L480.5 794 L485.3 802 L490.6 810 L496.5 818 L503.0 826 L510.4 834 L518.7 842 L528.2 850" stroke-dasharray="7.5 7.5"/><path d="M698.1 282 L681.8 290 L667.6 298 L654.8 306 L643.2 314 L632.5 322 L622.6 330 L613.3 338 L604.5 346 L596.3 354 L588.5 362 L581.1 370 L574.1 378 L567.4 386 L561.0 394 L555.0 402 L549.2 410 L543.6 418 L538.3 426 L533.3 434 L528.5 442 L523.9 450 L519.4 458 L515.2 466 L511.2 474 L507.4 482 L503.8 490 L500.4 498 L497.1 506 L494.0 514 L491.1 522 L488.3 530 L485.8 538 L483.3 546 L481.1 554 L479.0 562 L477.1 570 L475.3 578 L473.7 586 L472.3 594 L471.1 602 L470.0 610 L469.0 618 L468.3 626 L467.7 634 L467.3 642 L467.1 650 L467.0 658 L467.2 666 L467.5 674 L468.0 682 L468.8 690 L469.7 698 L470.9 706 L472.3 714 L473.9 722 L475.8 730 L477.9 738 L480.3 746 L483.0 754 L486.0 762 L489.4 770 L493.1 778 L497.3 786 L501.8 794 L506.9 802 L512.6 810 L518.9 818 L526.0 826 L534.0 834 L543.2 842 L553.9 850"/><path d="M1135.3 285.0 Q1198.7 304.0 1262.0 331.4"/><path d="M1182.7 285.0 Q1222.3 297.7 1262.0 316.0" stroke-dasharray="15.0 9.0"/><path d="M1206.4 285.0 Q1234.2 294.1 1262.0 307.3"/><path d="M1104.8 844.0 Q1183.4 789.4 1262.0 693.3"/><path d="M1125.3 844.0 Q1193.7 796.5 1262.0 715.0" stroke-dasharray="12.0 9.0"/><path d="M1136.4 844.0 Q1199.2 799.9 1262.0 725.3"/><path d="M1150.0 844.0 Q1206.0 803.4 1262.0 734.7"/><path d="M1163.8 844.0 Q1212.9 808.2 1262.0 748.4"/><path d="M1188.5 844.0 Q1225.2 818.7 1262.0 777.4"/></g></svg><div class="a" style="left:72px;top:142px;width:296px;height:39px;background:#10b4f2"></div><div class="a" style="left:72px;top:189px;width:296px;height:209px;background:#10b4f2"></div><svg class="a" style="left:204.0px;top:397px" width="30" height="24"><path d="M2.5 0 L27.5 0 L15 22.6 Z" fill="#10b4f2"/></svg><div class="a" style="left:70px;top:240px;width:300px;text-align:center;color:#fff;font:30px/30px 'Liberation Sans',sans-serif;letter-spacing:-1.5px;white-space:nowrap">Insert an Image</div><div class="a" style="left:391px;top:99px;width:527px;height:341px;background:#f5f5f5"></div>
<svg class="a" style="left:391px;top:99px" width="527" height="341" viewBox="15 40 1235 805" preserveAspectRatio="none">
<path d="M245 95 L330 190 L320 95 L420 200 L410 95 L520 240 L560 200 L610 260 L640 330 L780 410 L850 430 L870 540 L880 590 L990 720 L1000 785 L740 790 L650 680 L480 640 L320 520 L260 440 L240 380 L205 340 L260 330 L185 290 L250 270 L175 230 L270 215 L200 155 L300 180 Z" fill="#58250f"/>
<path d="M800 405 L860 350 L830 300 L880 320 L870 250 L910 290 L940 200 L960 270 L990 215 L1010 285 L920 400 L860 430 Z" fill="#4a1f0c"/>
<path d="M850 425 Q930 410 990 460 Q1030 500 1020 540 L980 520 Q930 560 880 590 L865 520 Z" fill="#fff"/>
<path d="M975 495 L1025 510 Q1040 540 1025 565 L1005 545 L975 530 Z" fill="#f0b81c"/>
<path d="M440 785 Q520 720 640 690 L700 745 L720 790 Z" fill="#e9e3d0"/>
<path d="M930 780 L990 710 L1060 700 L1090 730 L1040 760 L1020 785 Z" fill="#f0b81c"/>
</svg></div></div>
<div class="num" style="top:813px;color:#444">6</div>
<svg class="a" style="left:13px;top:833px" width="12" height="10" viewBox="0 0 12 10"><path d="M0.6 1.3L2.6 2.1 M0.6 4.8H2.5 M0.6 8.3L2.7 7.4" stroke="#333" stroke-width="1"/><path d="M7.3 0.3L8.5 3.6L11.8 3.6L9.2 5.7L10.2 9.3L7.3 7.2L4.4 9.3L5.4 5.7L2.8 3.6L6.1 3.6Z" fill="#333"/></svg>
<div class="a" style="left:38px;top:818px;width:180px;height:103px;border:1px solid #d2d2d8;background:#fff;overflow:hidden"><div class="a" style="left:0;top:0;width:992px;height:558px;transform-origin:0 0;transform:scale(0.1794,0.181)"><svg class="a" style="left:0;top:0" width="992" height="558" viewBox="270 285 992 558"><g fill="none" stroke="#adadad" stroke-width="4.6"><path d="M401.5 282 L393.2 290 L385.2 298 L377.5 306 L370.1 314 L363.0 322 L356.1 330 L349.5 338 L343.1 346 L336.9 354 L330.9 362 L325.1 370 L319.5 378 L314.2 386 L309.0 394 L304.0 402 L299.1 410 L294.4 418 L289.9 426 L285.6 434 L281.4 442 L277.4 450 L273.5 458 L269.7 466 L266.1 474 L262.7 482 L259.3 490 L256.2 498 L253.1 506 L250.2 514 L247.4 522 L244.7 530 L242.2 538 L239.8 546 L237.5 554 L235.3 562 L233.2 570 L231.3 578 L229.5 586 L227.8 594 L226.2 602 L224.7 610 L223.3 618 L222.1 626 L220.9 634 L219.9 642 L219.0 650 L218.2 658 L217.5 666 L216.9 674 L216.4 682 L216.0 690 L215.7 698 L215.6 706 L215.5 714 L215.6 722 L215.7 730 L216.0 738 L216.4 746 L216.8 754 L217.4 762 L218.1 770 L218.9 778 L219.8 786 L220.9 794 L222.0 802 L223.3 810 L224.6 818 L226.1 826 L227.7 834 L229.4 842 L231.2 850"/><path d="M418.5 282 L410.2 290 L402.4 298 L394.8 306 L387.6 314 L380.6 322 L373.9 330 L367.5 338 L361.4 346 L355.5 354 L349.8 362 L344.3 370 L339.1 378 L334.0 386 L329.2 394 L324.5 402 L320.1 410 L315.8 418 L311.7 426 L307.7 434 L304.0 442 L300.4 450 L296.9 458 L293.6 466 L290.5 474 L287.5 482 L284.7 490 L282.0 498 L279.5 506 L277.0 514 L274.8 522 L272.6 530 L270.7 538 L268.8 546 L267.1 554 L265.5 562 L264.0 570 L262.6 578 L261.4 586 L260.3 594 L259.4 602 L258.5 610 L257.8 618 L257.2 626 L256.8 634 L256.4 642 L256.2 650 L256.1 658 L256.1 666 L256.3 674 L256.5 682 L256.9 690 L257.5 698 L258.1 706 L258.9 714 L259.7 722 L260.8 730 L261.9 738 L263.2 746 L264.6 754 L266.1 762 L267.7 770 L269.5 778 L271.4 786 L273.5 794 L275.7 802 L278.0 810 L280.5 818 L283.1 826 L285.8 834 L288.7 842 L291.7 850"/><path d="M435.2 282 L426.9 290 L419.0 298 L411.3 306 L404.0 314 L396.9 322 L390.1 330 L383.5 338 L377.2 346 L371.2 354 L365.3 362 L359.7 370 L354.4 378 L349.2 386 L344.3 394 L339.5 402 L335.0 410 L330.6 418 L326.4 426 L322.4 434 L318.6 442 L315.0 450 L311.5 458 L308.2 466 L305.1 474 L302.1 482 L299.3 490 L296.7 498 L294.2 506 L291.8 514 L289.6 522 L287.6 530 L285.6 538 L283.9 546 L282.2 554 L280.7 562 L279.3 570 L278.1 578 L277.0 586 L276.0 594 L275.2 602 L274.4 610 L273.8 618 L273.4 626 L273.0 634 L272.8 642 L272.6 650 L272.6 658 L272.7 666 L273.0 674 L273.3 682 L273.8 690 L274.3 698 L275.0 706 L275.8 714 L276.7 722 L277.7 730 L278.8 738 L280.0 746 L281.3 754 L282.8 762 L284.3 770 L285.9 778 L287.7 786 L289.5 794 L291.5 802 L293.5 810 L295.6 818 L297.9 826 L300.2 834 L302.7 842 L305.2 850"/><path d="M534.9 282 L525.9 290 L517.4 298 L509.3 306 L501.5 314 L494.0 322 L486.9 330 L480.0 338 L473.4 346 L467.0 354 L460.9 362 L454.9 370 L449.2 378 L443.7 386 L438.3 394 L433.2 402 L428.2 410 L423.3 418 L418.7 426 L414.2 434 L409.8 442 L405.6 450 L401.5 458 L397.6 466 L393.8 474 L390.2 482 L386.7 490 L383.3 498 L380.0 506 L376.9 514 L373.9 522 L371.0 530 L368.2 538 L365.6 546 L363.1 554 L360.7 562 L358.4 570 L356.3 578 L354.2 586 L352.3 594 L350.5 602 L348.9 610 L347.3 618 L345.9 626 L344.6 634 L343.4 642 L342.3 650 L341.4 658 L340.6 666 L339.9 674 L339.4 682 L339.0 690 L338.8 698 L338.6 706 L338.7 714 L338.8 722 L339.2 730 L339.6 738 L340.3 746 L341.1 754 L342.1 762 L343.2 770 L344.6 778 L346.1 786 L347.9 794 L349.9 802 L352.1 810 L354.5 818 L357.2 826 L360.2 834 L363.5 842 L367.1 850" stroke-dasharray="16.5 7.5"/><path d="M543.5 282 L535.1 290 L527.1 298 L519.4 306 L512.1 314 L505.0 322 L498.2 330 L491.6 338 L485.3 346 L479.3 354 L473.4 362 L467.8 370 L462.3 378 L457.0 386 L452.0 394 L447.1 402 L442.3 410 L437.8 418 L433.4 426 L429.1 434 L425.0 442 L421.1 450 L417.3 458 L413.6 466 L410.1 474 L406.7 482 L403.4 490 L400.3 498 L397.3 506 L394.4 514 L391.7 522 L389.0 530 L386.5 538 L384.1 546 L381.9 554 L379.7 562 L377.7 570 L375.8 578 L374.0 586 L372.3 594 L370.8 602 L369.4 610 L368.0 618 L366.8 626 L365.7 634 L364.8 642 L363.9 650 L363.2 658 L362.6 666 L362.1 674 L361.7 682 L361.4 690 L361.3 698 L361.3 706 L361.4 714 L361.6 722 L362.0 730 L362.5 738 L363.1 746 L363.9 754 L364.8 762 L365.9 770 L367.1 778 L368.4 786 L369.9 794 L371.6 802 L373.4 810 L375.4 818 L377.5 826 L379.9 834 L382.4 842 L385.1 850" stroke-dasharray="12.0 7.5 3.0 7.5"/><path d="M592.1 282 L581.6 290 L571.7 298 L562.3 306 L553.4 314 L544.9 322 L536.7 330 L529.0 338 L521.5 346 L514.4 354 L507.5 362 L501.0 370 L494.6 378 L488.6 386 L482.7 394 L477.1 402 L471.7 410 L466.5 418 L461.4 426 L456.6 434 L452.0 442 L447.5 450 L443.3 458 L439.2 466 L435.2 474 L431.5 482 L427.9 490 L424.4 498 L421.1 506 L418.0 514 L415.0 522 L412.2 530 L409.6 538 L407.1 546 L404.7 554 L402.5 562 L400.5 570 L398.6 578 L396.8 586 L395.2 594 L393.8 602 L392.5 610 L391.4 618 L390.4 626 L389.6 634 L389.0 642 L388.5 650 L388.2 658 L388.1 666 L388.2 674 L388.4 682 L388.8 690 L389.5 698 L390.3 706 L391.3 714 L392.6 722 L394.0 730 L395.8 738 L397.7 746 L399.9 754 L402.4 762 L405.2 770 L408.3 778 L411.8 786 L415.6 794 L419.8 802 L424.4 810 L429.5 818 L435.2 826 L441.5 834 L448.6 842 L456.5 850"/><path d="M609.2 282 L597.5 290 L586.8 298 L576.8 306 L567.5 314 L558.7 322 L550.5 330 L542.7 338 L535.2 346 L528.2 354 L521.4 362 L515.0 370 L508.9 378 L503.0 386 L497.4 394 L492.0 402 L486.9 410 L482.0 418 L477.3 426 L472.7 434 L468.4 442 L464.3 450 L460.3 458 L456.5 466 L452.9 474 L449.5 482 L446.2 490 L443.1 498 L440.1 506 L437.3 514 L434.6 522 L432.1 530 L429.8 538 L427.6 546 L425.5 554 L423.6 562 L421.8 570 L420.2 578 L418.8 586 L417.4 594 L416.3 602 L415.2 610 L414.3 618 L413.6 626 L413.1 634 L412.6 642 L412.4 650 L412.3 658 L412.3 666 L412.6 674 L413.0 682 L413.6 690 L414.3 698 L415.3 706 L416.4 714 L417.7 722 L419.3 730 L421.0 738 L423.0 746 L425.3 754 L427.8 762 L430.5 770 L433.6 778 L436.9 786 L440.6 794 L444.7 802 L449.1 810 L454.0 818 L459.4 826 L465.4 834 L472.0 842 L479.4 850"/><path d="M620.3 282 L608.0 290 L596.9 298 L586.7 306 L577.2 314 L568.4 322 L560.1 330 L552.3 338 L545.0 346 L538.0 354 L531.3 362 L525.0 370 L519.0 378 L513.2 386 L507.7 394 L502.4 402 L497.4 410 L492.6 418 L488.0 426 L483.6 434 L479.4 442 L475.3 450 L471.5 458 L467.8 466 L464.3 474 L461.0 482 L457.8 490 L454.7 498 L451.9 506 L449.1 514 L446.6 522 L444.1 530 L441.8 538 L439.7 546 L437.7 554 L435.9 562 L434.2 570 L432.6 578 L431.2 586 L429.9 594 L428.8 602 L427.8 610 L427.0 618 L426.3 626 L425.8 634 L425.4 642 L425.1 650 L425.1 658 L425.2 666 L425.4 674 L425.9 682 L426.5 690 L427.3 698 L428.2 706 L429.4 714 L430.8 722 L432.4 730 L434.2 738 L436.2 746 L438.5 754 L441.1 762 L443.9 770 L447.1 778 L450.6 786 L454.4 794 L458.7 802 L463.4 810 L468.6 818 L474.5 826 L481.0 834 L488.3 842 L496.7 850"/><path d="M650.8 282 L637.8 290 L625.8 298 L614.7 306 L604.4 314 L594.6 322 L585.4 330 L576.7 338 L568.5 346 L560.7 354 L553.2 362 L546.1 370 L539.3 378 L532.8 386 L526.6 394 L520.7 402 L515.0 410 L509.6 418 L504.4 426 L499.4 434 L494.7 442 L490.1 450 L485.8 458 L481.7 466 L477.7 474 L474.0 482 L470.4 490 L467.0 498 L463.8 506 L460.8 514 L457.9 522 L455.2 530 L452.7 538 L450.4 546 L448.2 554 L446.2 562 L444.3 570 L442.6 578 L441.1 586 L439.8 594 L438.6 602 L437.6 610 L436.7 618 L436.1 626 L435.6 634 L435.3 642 L435.1 650 L435.2 658 L435.4 666 L435.8 674 L436.4 682 L437.2 690 L438.2 698 L439.5 706 L440.9 714 L442.6 722 L444.5 730 L446.7 738 L449.1 746 L451.8 754 L454.8 762 L458.1 770 L461.8 778 L465.7 786 L470.1 794 L474.9 802 L480.1 810 L485.9 818 L492.2 826 L499.2 834 L507.0 842 L515.6 850"/><path d="M665.9 282 L651.8 290 L639.2 298 L627.6 306 L616.9 314 L607.0 322 L597.6 330 L588.9 338 L580.6 346 L572.8 354 L565.3 362 L558.2 370 L551.5 378 L545.0 386 L538.9 394 L533.0 402 L527.4 410 L522.0 418 L516.9 426 L512.0 434 L507.3 442 L502.8 450 L498.5 458 L494.4 466 L490.5 474 L486.8 482 L483.2 490 L479.9 498 L476.7 506 L473.7 514 L470.8 522 L468.1 530 L465.6 538 L463.2 546 L461.0 554 L459.0 562 L457.1 570 L455.4 578 L453.8 586 L452.4 594 L451.2 602 L450.1 610 L449.2 618 L448.5 626 L447.9 634 L447.5 642 L447.2 650 L447.2 658 L447.3 666 L447.6 674 L448.1 682 L448.8 690 L449.7 698 L450.9 706 L452.2 714 L453.8 722 L455.6 730 L457.6 738 L459.9 746 L462.5 754 L465.4 762 L468.6 770 L472.2 778 L476.1 786 L480.5 794 L485.3 802 L490.6 810 L496.5 818 L503.0 826 L510.4 834 L518.7 842 L528.2 850" stroke-dasharray="7.5 7.5"/><path d="M698.1 282 L681.8 290 L667.6 298 L654.8 306 L643.2 314 L632.5 322 L622.6 330 L613.3 338 L604.5 346 L596.3 354 L588.5 362 L581.1 370 L574.1 378 L567.4 386 L561.0 394 L555.0 402 L549.2 410 L543.6 418 L538.3 426 L533.3 434 L528.5 442 L523.9 450 L519.4 458 L515.2 466 L511.2 474 L507.4 482 L503.8 490 L500.4 498 L497.1 506 L494.0 514 L491.1 522 L488.3 530 L485.8 538 L483.3 546 L481.1 554 L479.0 562 L477.1 570 L475.3 578 L473.7 586 L472.3 594 L471.1 602 L470.0 610 L469.0 618 L468.3 626 L467.7 634 L467.3 642 L467.1 650 L467.0 658 L467.2 666 L467.5 674 L468.0 682 L468.8 690 L469.7 698 L470.9 706 L472.3 714 L473.9 722 L475.8 730 L477.9 738 L480.3 746 L483.0 754 L486.0 762 L489.4 770 L493.1 778 L497.3 786 L501.8 794 L506.9 802 L512.6 810 L518.9 818 L526.0 826 L534.0 834 L543.2 842 L553.9 850"/><path d="M1135.3 285.0 Q1198.7 304.0 1262.0 331.4"/><path d="M1182.7 285.0 Q1222.3 297.7 1262.0 316.0" stroke-dasharray="15.0 9.0"/><path d="M1206.4 285.0 Q1234.2 294.1 1262.0 307.3"/><path d="M1104.8 844.0 Q1183.4 789.4 1262.0 693.3"/><path d="M1125.3 844.0 Q1193.7 796.5 1262.0 715.0" stroke-dasharray="12.0 9.0"/><path d="M1136.4 844.0 Q1199.2 799.9 1262.0 725.3"/><path d="M1150.0 844.0 Q1206.0 803.4 1262.0 734.7"/><path d="M1163.8 844.0 Q1212.9 808.2 1262.0 748.4"/><path d="M1188.5 844.0 Q1225.2 818.7 1262.0 777.4"/></g></svg><div class="a" style="left:73px;top:142px;width:294px;height:42px;background:#10b4f2"></div><div class="a" style="left:73px;top:188px;width:294px;height:210px;background:#10b4f2"></div><svg class="a" style="left:204.0px;top:397px" width="30" height="24"><path d="M2.5 0 L27.5 0 L15 22.6 Z" fill="#10b4f2"/></svg><div class="a" style="left:70px;top:215px;width:300px;text-align:center;color:#fff;font:30px/30px 'Liberation Sans',sans-serif;letter-spacing:-1.5px;white-space:nowrap">Learn to Make a</div><div class="a" style="left:70px;top:247px;width:300px;text-align:center;color:#fff;font:30px/30px 'Liberation Sans',sans-serif;letter-spacing:-1.5px;white-space:nowrap">Table</div><div class="a" style="left:418px;top:71px;width:502px;height:365px;background:#e3f2fb"></div><div class="a" style="left:418px;top:71px;width:502px;height:59px;background:#10b4f2"></div><div class="a" style="left:418px;top:71px;width:98px;height:365px;background:#10b4f2"></div><div class="a" style="left:617px;top:71px;width:3px;height:365px;background:rgba(255,255,255,0.6)"></div><div class="a" style="left:718px;top:71px;width:3px;height:365px;background:rgba(255,255,255,0.6)"></div><div class="a" style="left:819px;top:71px;width:3px;height:365px;background:rgba(255,255,255,0.6)"></div><div class="a" style="left:920px;top:71px;width:3px;height:365px;background:rgba(255,255,255,0.6)"></div><div class="a" style="left:418px;top:191px;width:502px;height:3px;background:rgba(255,255,255,0.6)"></div><div class="a" style="left:418px;top:252px;width:502px;height:3px;background:rgba(255,255,255,0.6)"></div><div class="a" style="left:418px;top:313px;width:502px;height:3px;background:rgba(255,255,255,0.6)"></div><div class="a" style="left:418px;top:374px;width:502px;height:3px;background:rgba(255,255,255,0.6)"></div><div class="a" style="left:618px;top:194px;width:100px;height:60px;background:#c6e6f8"></div><div class="a" style="left:424px;top:74px;font:bold 14px/16px 'Liberation Sans',sans-serif;color:#fff">Modules</div></div></div>
<div class="a" style="left:36px;top:340px;width:184px;height:107px;border:3px solid #e86d4b"></div>
<div class="a" style="left:206px;top:808px;width:20px;height:20px;border-radius:50%;background:#498205;color:#fff;font:10px/20px 'Liberation Sans',sans-serif;text-align:center">LD</div>
<!-- ============ STATUS BAR ============ -->
<div class="a" style="left:255px;top:933px;width:1024px;height:2px;background:#d4d6da"></div>
<div class="a" style="left:0;top:936px;width:1279px;height:1px;background:#e6e6e6"></div>
<div id="status" class="a"></div>
<div class="st" style="left:14px;letter-spacing:0.15px">Slide 2 of 6</div>
<div class="st" style="left:100px">English (U.S.)</div>
<div class="st" style="left:893px;letter-spacing:0.22px">Help Improve Office</div>
<svg class="a" style="left:1027px;top:940px" width="16" height="15" viewBox="0 0 16 15"><path d="M5 4L8 1.5L11 4 M0.5 7.5H15.5 M0.5 10.5H15.5 M0.5 13.5H11" fill="none" stroke="#484644" stroke-width="1"/></svg>
<div class="st" style="left:1046px">Notes</div>
<div class="a" style="left:1086px;top:937px;width:36px;height:22px;background:#c8c6c4"></div>
<svg class="a" style="left:1096px;top:940px" width="17" height="15" viewBox="0 0 17 15"><rect x="0.8" y="0.8" width="15.4" height="13.4" fill="none" stroke="#3b3a39" stroke-width="1.2"/><path d="M3.5 0.8V14.2 M3.5 11H16.2 M6 3.5H13.5V8.5H6Z" fill="none" stroke="#3b3a39" stroke-width="1.1"/></svg>
<svg class="a" style="left:1133px;top:940px" width="16" height="15" viewBox="0 0 16 15"><rect x="0.8" y="0.8" width="5.8" height="5" fill="none" stroke="#3b3a39" stroke-width="1.1"/><rect x="9.2" y="0.8" width="5.8" height="5" fill="none" stroke="#3b3a39" stroke-width="1.1"/><rect x="0.8" y="9" width="5.8" height="5" fill="none" stroke="#3b3a39" stroke-width="1.1"/><rect x="9.2" y="9" width="5.8" height="5" fill="none" stroke="#3b3a39" stroke-width="1.1"/></svg>
<svg class="a" style="left:1170px;top:940px" width="16" height="16" viewBox="0 0 16 16"><path d="M1 1H15 M2.5 1V8.5H13.5V1 M8 8.5V15 M4 15H12 M5 4.5H11" fill="none" stroke="#3b3a39" stroke-width="1.1"/></svg>
<div class="st" style="left:1206px;letter-spacing:0.1px">78%</div>
<svg class="a" style="left:1248px;top:940px" width="16" height="16" viewBox="0 0 16 16"><rect x="5" y="5" width="6" height="6" fill="none" stroke="#3b3a39" stroke-width="1.3"/><path d="M6 2.5L8 0.8L10 2.5 M6 13.5L8 15.2L10 13.5 M2.5 6L0.8 8L2.5 10 M13.5 6L15.2 8L13.5 10" fill="none" stroke="#3b3a39" stroke-width="1.1"/></svg>
<div class="a" style="left:1279px;top:0;width:1px;height:960px;background:#000"></div>
<div class="a" style="left:0;top:959px;width:1280px;height:1px;background:#000"></div>
</div></body></html>
